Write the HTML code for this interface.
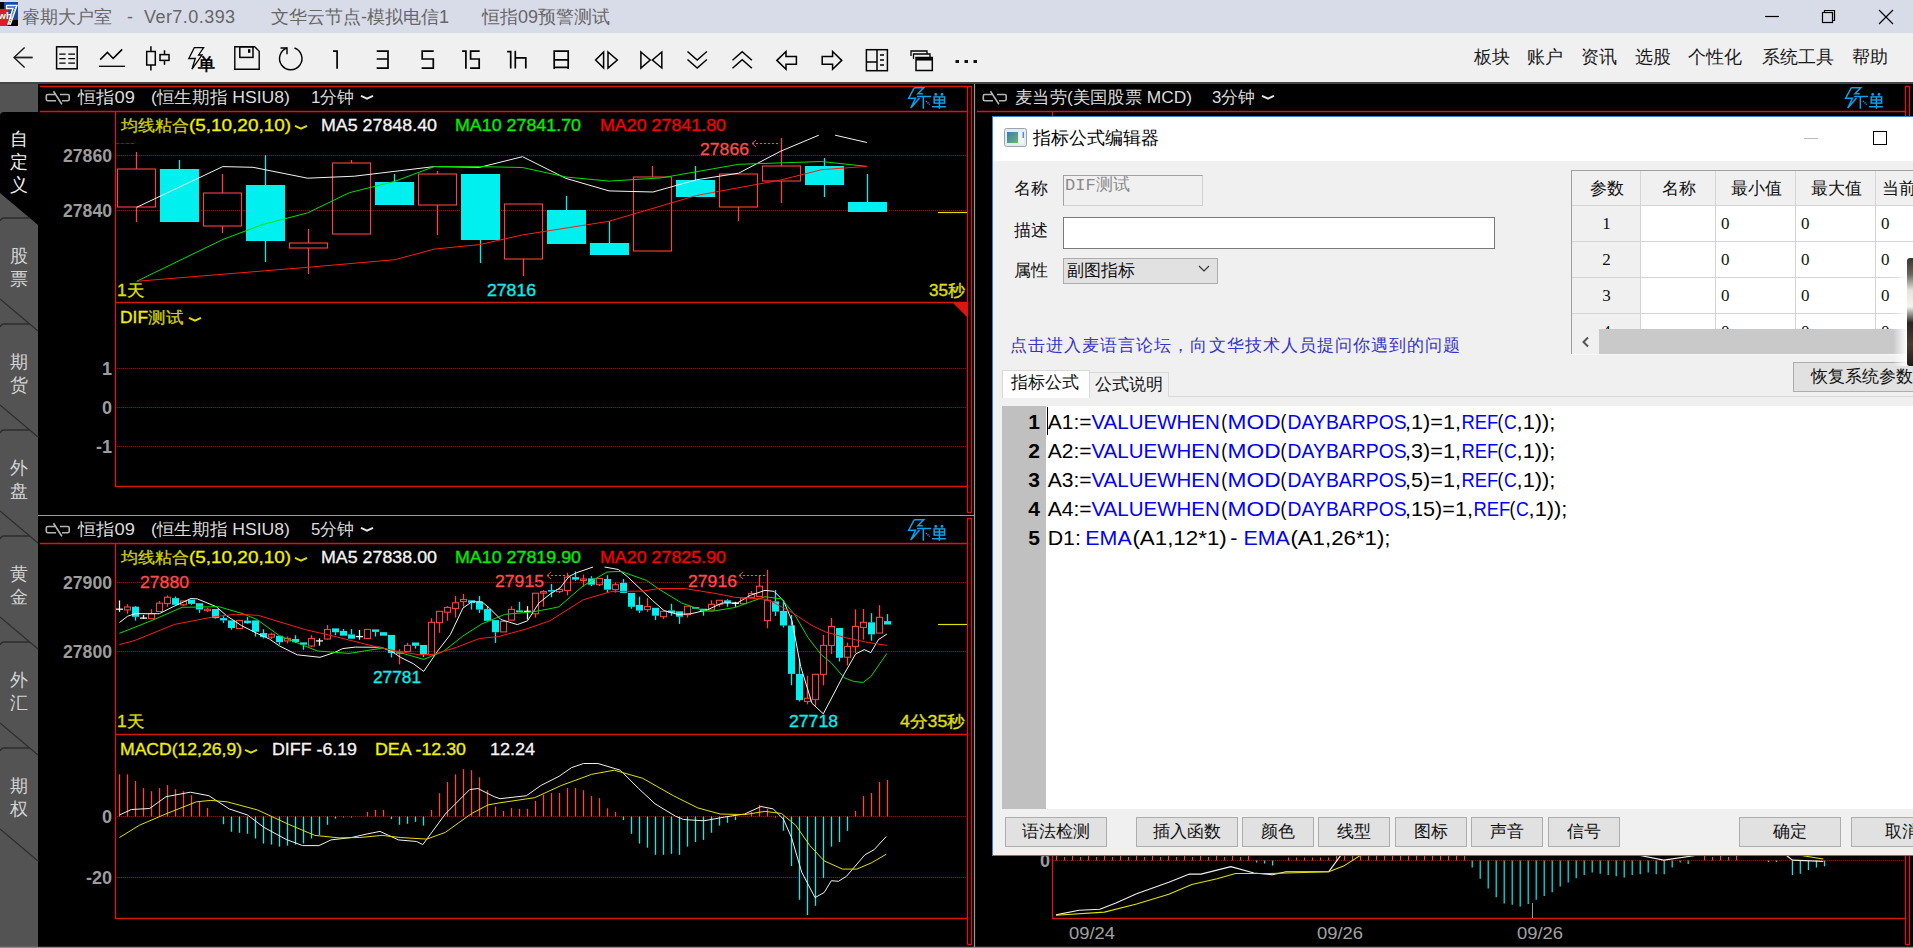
<!DOCTYPE html><html><head><meta charset="utf-8"><style>
*{margin:0;padding:0;box-sizing:border-box}
html,body{width:1913px;height:948px;overflow:hidden;background:#000;font-family:"Liberation Sans",sans-serif}
.a{position:absolute;white-space:nowrap}
#title{left:0;top:0;width:1913px;height:33px;background:#d8dbe8}
#tool{left:0;top:33px;width:1913px;height:49px;background:#f0f0f0}
#sep{left:0;top:82px;width:1913px;height:2px;background:#454545}
.tt{font-size:18px;color:#666;top:6px;line-height:22px}
.mn{font-size:18px;color:#1a1a1a;top:46px;line-height:22px}
.dlg{left:992px;top:116px;width:930px;height:740px;background:#f0f0f0;border:1px solid #3c7fd0;border-right:none}
.btn{background:#e1e1e1;border:1px solid #adadad;font-size:17px;color:#111;text-align:center;line-height:28px;height:30px;top:817px}
.lbl{font-size:17px;color:#111;line-height:20px}
.code{font-size:20px;line-height:29px;color:#000}
.code b{font-weight:normal;color:#0000ff}
.ln{font-size:21px;font-weight:bold;color:#000;line-height:29px;text-align:right;width:40px}
</style></head><body>
<div class="a" id="title"></div>
<svg class="a" style="left:0;top:2px" width="19" height="25" viewBox="0 0 19 25">
<rect x="0" y="0" width="18" height="24" fill="#1848a8"/><rect x="0" y="0" width="4" height="7" fill="#000"/>
<rect x="0" y="7" width="8" height="17" fill="#d82020"/><rect x="8" y="18" width="10" height="6" fill="#000"/>
<path d="M6.5 3.5 H17 L10.5 22 H8 L13 6.5 H6.5 Z" fill="#2a5ab8" stroke="#fff" stroke-width="1.3"/>
<path d="M15.5 5 L9.5 21" stroke="#fff" stroke-width="1" stroke-dasharray="1 1"/>
<text x="-1.5" y="17" font-size="9.5" font-weight="bold" fill="#fff" font-family="Liberation Sans">wh</text></svg>
<div class="a tt" style="left:22px">睿期大户室</div><div class="a tt" style="left:127px">-</div><div class="a tt" style="left:144px;letter-spacing:0.45px">Ver7.0.393</div>
<div class="a tt" style="left:271px">文华云节点-模拟电信1</div>
<div class="a tt" style="left:482px">恒指09预警测试</div>
<svg class="a" style="left:1760px;top:6px" width="140" height="22">
<line x1="5" y1="10.5" x2="19" y2="10.5" stroke="#000" stroke-width="1.2"/>
<rect x="62.5" y="6.5" width="10" height="10" fill="none" stroke="#000" stroke-width="1.2"/>
<path d="M64.5 6.5 V4.5 H74.5 V14.5 H72.5" fill="none" stroke="#000" stroke-width="1.2"/>
<path d="M119 4 L133 18 M133 4 L119 18" stroke="#000" stroke-width="1.2"/></svg>
<div class="a" id="tool"></div>
<div class="a" id="sep"></div>
<div class="a mn" style="left:1474px">板块</div>
<div class="a mn" style="left:1527px">账户</div>
<div class="a mn" style="left:1581px">资讯</div>
<div class="a mn" style="left:1635px">选股</div>
<div class="a mn" style="left:1688px">个性化</div>
<div class="a mn" style="left:1762px">系统工具</div>
<div class="a mn" style="left:1852px">帮助</div>
<svg class="a" style="left:0;top:0" width="1000" height="81" viewBox="0 0 1000 81">
<path d="M24.6 47.6 L14 57.5 L24.6 67.4" fill="none" stroke="#111" stroke-width="1.3"/><path d="M14 57.5 H32.7" stroke="#222" stroke-width="1.8"/>
<rect x="56.6" y="46.8" width="20.6" height="22" fill="none" stroke="#000" stroke-width="1.5"/>
<path d="M59.3 54.2 H65.6 M68.3 54.2 H75" stroke="#000" stroke-width="1.3"/>
<path d="M59.3 58.7 H65.6 M68.3 58.7 H75" stroke="#000" stroke-width="1.3"/>
<path d="M59.3 63.2 H65.6 M68.3 63.2 H75" stroke="#000" stroke-width="1.3"/>
<path d="M100.2 59.6 L107.4 52.4 L113.2 58.4 L122.2 49.4" fill="none" stroke="#000" stroke-width="1.5"/><path d="M99 66.3 H125" stroke="#000" stroke-width="1.3"/>
<rect x="146.7" y="51.5" width="8.6" height="13.5" fill="none" stroke="#000" stroke-width="1.5"/><path d="M150.9 46.3 V51.5 M150.9 65 V70.6" fill="none" stroke="#000" stroke-width="1.5"/>
<rect x="160" y="54.6" width="9" height="5.8" fill="none" stroke="#000" stroke-width="1.5"/><path d="M164.5 50.3 V54.6 M164.5 60.4 V64.7" fill="none" stroke="#000" stroke-width="1.5"/>
<path d="M194.3 47.6 H203.6 L198.6 55 H202 L192 69.2 L195.3 58.5 H188.8 Z" fill="none" stroke="#000" stroke-width="1.3" stroke-linejoin="miter"/>
<text x="198" y="70" font-size="17" font-weight="bold" fill="#000" font-family="Liberation Sans">单</text>
<path d="M234.8 46.8 H254.7 L259.2 51.3 V69.2 H234.8 Z" fill="none" stroke="#000" stroke-width="1.4"/>
<rect x="239.8" y="46.8" width="13.2" height="10.6" fill="none" stroke="#000" stroke-width="1.5"/><rect x="248" y="49.2" width="2.4" height="3.6" fill="#000"/>
<path d="M287 48 A11.2 11.2 0 1 0 294.5 48" fill="none" stroke="#000" stroke-width="1.4"/><path d="M280.5 48 H287 V54.3" fill="none" stroke="#000" stroke-width="1.4"/>
<path d="M333 51.1 H337.1 V68.7" fill="none" stroke="#000" stroke-width="1.7" stroke-linecap="butt"/>
<path d="M376.7 51.1 H388 V68.2 H376.7 M376.7 59 H388" fill="none" stroke="#000" stroke-width="1.7" stroke-linecap="butt"/>
<path d="M433.7 51.1 H422.2 V59 H433.3 V68.2 H421.6" fill="none" stroke="#000" stroke-width="1.7" stroke-linecap="butt"/>
<path d="M462.1 51.1 H465.9 V68.7" fill="none" stroke="#000" stroke-width="1.7" stroke-linecap="butt"/><path d="M479.7 51.1 H470.6 V59 H479.2 V68.2 H470" fill="none" stroke="#000" stroke-width="1.7" stroke-linecap="butt"/>
<path d="M507.1 51.6 H510.7 V68.4 M515.3 50.7 V68.4 M515.3 57.8 H525.8 V68.4" fill="none" stroke="#000" stroke-width="1.7" stroke-linecap="butt"/>
<path d="M554.2 68.9 V51.1 H568.2 V68.9 M554.2 59.8 H568.2 M554.2 67.4 H568.2" fill="none" stroke="#000" stroke-width="1.7" stroke-linecap="butt"/>
<path d="M603.6 52 L595.6 60 L603.6 68 Z M608 52 L617.3 60 L608 68 Z" fill="none" stroke="#000" stroke-width="1.5"/>
<path d="M640.9 52 L650.2 60 L640.9 68 Z M661.8 52 L652.4 60 L661.8 68 Z" fill="none" stroke="#000" stroke-width="1.5"/>
<path d="M687.5 51.5 L697.2 60 L706.9 51.5 M687.5 59.5 L697.2 68 L706.9 59.5" fill="none" stroke="#000" stroke-width="1.5"/>
<path d="M732.5 60.3 L742.2 51.8 L751.9 60.3 M732.5 68.3 L742.2 59.8 L751.9 68.3" fill="none" stroke="#000" stroke-width="1.5"/>
<path d="M776.9 60.4 L786 51.5 V56.6 H796.4 V64.2 H786 V69.3 Z" fill="none" stroke="#000" stroke-width="1.5" stroke-linejoin="miter"/>
<path d="M841.7 60.4 L832.6 51.5 V56.6 H822.2 V64.2 H832.6 V69.3 Z" fill="none" stroke="#000" stroke-width="1.5" stroke-linejoin="miter"/>
<rect x="866.4" y="49.7" width="21" height="21" fill="none" stroke="#000" stroke-width="1.5"/><path d="M877 49.7 V70.7 M866.4 62 H877" fill="none" stroke="#000" stroke-width="1.5"/><path d="M880 55 H884 M880 60 H884 M880 65 H884" stroke="#000" stroke-width="1.5"/>
<path d="M911 56 V51 H927 V54.5 M913.5 59 V54 H930 V57" fill="none" stroke="#000" stroke-width="1.3"/><rect x="916" y="57.5" width="16.3" height="13" fill="none" stroke="#000" stroke-width="1.5"/><path d="M916 59.3 H932.3" stroke="#000" stroke-width="2.5"/>
<rect x="955.5" y="60" width="3.5" height="3" fill="#111"/><rect x="964.5" y="60" width="3.5" height="3" fill="#111"/><rect x="973.5" y="60" width="3.5" height="3" fill="#111"/>
</svg>
<!--SIDEBAR-->
<svg class="a" style="left:0;top:0" width="1913" height="948" font-family="Liberation Sans">
<rect x="0" y="84" width="38" height="864" fill="#535353"/>
<path d="M0 116 Q0 112 4 112 H38 V225 L0 193 Z" fill="#000"/>
<text x="10" y="145" font-size="18" fill="#f0f0f0" stroke="#f0f0f0" stroke-width="0" >自</text>
<text x="10" y="168" font-size="18" fill="#f0f0f0" stroke="#f0f0f0" stroke-width="0" >定</text>
<text x="10" y="191" font-size="18" fill="#f0f0f0" stroke="#f0f0f0" stroke-width="0" >义</text>
<path d="M0 221 Q1 218 4 218 H29.7" fill="none" stroke="#2e2e2e" stroke-width="1.3"/>
<line x1="0" y1="299" x2="38" y2="331" stroke="#2e2e2e" stroke-width="1.3"/>
<text x="10" y="262" font-size="18" fill="#d4d4d4" stroke="#d4d4d4" stroke-width="0" >股</text>
<text x="10" y="285" font-size="18" fill="#d4d4d4" stroke="#d4d4d4" stroke-width="0" >票</text>
<path d="M0 327 Q1 324 4 324 H29.7" fill="none" stroke="#2e2e2e" stroke-width="1.3"/>
<line x1="0" y1="405" x2="38" y2="437" stroke="#2e2e2e" stroke-width="1.3"/>
<text x="10" y="368" font-size="18" fill="#d4d4d4" stroke="#d4d4d4" stroke-width="0" >期</text>
<text x="10" y="391" font-size="18" fill="#d4d4d4" stroke="#d4d4d4" stroke-width="0" >货</text>
<path d="M0 433 Q1 430 4 430 H29.7" fill="none" stroke="#2e2e2e" stroke-width="1.3"/>
<line x1="0" y1="511" x2="38" y2="543" stroke="#2e2e2e" stroke-width="1.3"/>
<text x="10" y="474" font-size="18" fill="#d4d4d4" stroke="#d4d4d4" stroke-width="0" >外</text>
<text x="10" y="497" font-size="18" fill="#d4d4d4" stroke="#d4d4d4" stroke-width="0" >盘</text>
<path d="M0 539 Q1 536 4 536 H29.7" fill="none" stroke="#2e2e2e" stroke-width="1.3"/>
<line x1="0" y1="617" x2="38" y2="649" stroke="#2e2e2e" stroke-width="1.3"/>
<text x="10" y="580" font-size="18" fill="#d4d4d4" stroke="#d4d4d4" stroke-width="0" >黄</text>
<text x="10" y="603" font-size="18" fill="#d4d4d4" stroke="#d4d4d4" stroke-width="0" >金</text>
<path d="M0 645 Q1 642 4 642 H29.7" fill="none" stroke="#2e2e2e" stroke-width="1.3"/>
<line x1="0" y1="723" x2="38" y2="755" stroke="#2e2e2e" stroke-width="1.3"/>
<text x="10" y="686" font-size="18" fill="#d4d4d4" stroke="#d4d4d4" stroke-width="0" >外</text>
<text x="10" y="709" font-size="18" fill="#d4d4d4" stroke="#d4d4d4" stroke-width="0" >汇</text>
<path d="M0 751 Q1 748 4 748 H29.7" fill="none" stroke="#2e2e2e" stroke-width="1.3"/>
<line x1="0" y1="829" x2="38" y2="861" stroke="#2e2e2e" stroke-width="1.3"/>
<text x="10" y="792" font-size="18" fill="#d4d4d4" stroke="#d4d4d4" stroke-width="0" >期</text>
<text x="10" y="815" font-size="18" fill="#d4d4d4" stroke="#d4d4d4" stroke-width="0" >权</text>

<line x1="38" y1="515.5" x2="974" y2="515.5" stroke="#9a9a9a" stroke-width="1.2"/>
<line x1="974.5" y1="84" x2="974.5" y2="948" stroke="#9a9a9a" stroke-width="1.2"/>
<line x1="0" y1="947.5" x2="1913" y2="947.5" stroke="#8a8a8a" stroke-width="1.5"/>
<line x1="40" y1="86.5" x2="967" y2="86.5" stroke="#d81810" stroke-width="1.3"/>
<line x1="40" y1="111.5" x2="967" y2="111.5" stroke="#d81810" stroke-width="1.3"/>
<line x1="115" y1="302.5" x2="967" y2="302.5" stroke="#d81810" stroke-width="1.3"/>
<line x1="115" y1="486.5" x2="967" y2="486.5" stroke="#d81810" stroke-width="1.3"/>
<line x1="115.5" y1="111" x2="115.5" y2="487" stroke="#d81810" stroke-width="1.3"/>
<rect x="967.5" y="86.5" width="4" height="426" rx="0.5" fill="none" stroke="#d81810" stroke-width="1.3"/>
<line x1="40" y1="543.5" x2="967" y2="543.5" stroke="#d81810" stroke-width="1.3"/>
<line x1="115" y1="734.5" x2="967" y2="734.5" stroke="#d81810" stroke-width="1.3"/>
<line x1="115" y1="918.5" x2="967" y2="918.5" stroke="#d81810" stroke-width="1.3"/>
<line x1="115.5" y1="543" x2="115.5" y2="919" stroke="#d81810" stroke-width="1.3"/>
<rect x="967.5" y="518.5" width="4" height="426" rx="0.5" fill="none" stroke="#d81810" stroke-width="1.3"/>
<g transform="translate(46,91)"><path d="M9.7 3.5 H1.8 Q0.3 3.5 0.3 5 V8.2 Q0.3 9.7 1.8 9.7 H10 M7.5 0.3 L15.9 13.2 M14 3.5 H21.7 Q23.2 3.5 23.2 5 V8.2 Q23.2 9.7 21.7 9.7 H16" fill="none" stroke="#b4b4b4" stroke-width="1.6"/></g>
<text x="78" y="103" font-size="17" fill="#dcdcdc" stroke="#dcdcdc" stroke-width="0" textLength="57" lengthAdjust="spacingAndGlyphs" >恒指09</text>
<text x="151" y="103" font-size="17" fill="#dcdcdc" stroke="#dcdcdc" stroke-width="0" textLength="139" lengthAdjust="spacingAndGlyphs" >(恒生期指 HSIU8)</text>
<text x="311" y="103" font-size="17" fill="#dcdcdc" stroke="#dcdcdc" stroke-width="0" textLength="43" lengthAdjust="spacingAndGlyphs" >1分钟</text>
<path d="M361 95.8 L367 98.6 L373 95.8" fill="none" stroke="#e6e6e6" stroke-width="2" stroke-linejoin="miter"/>
<g transform="translate(908,87)" fill="none" stroke="#0fa0ea" stroke-width="1.5"><path d="M6.2 0.8 H15.7 L10 6.8 H14.8 M6.2 0.8 L0.7 11.2 H7.5 L2.8 21 L11.5 11"/><path d="M9 9.5 H23 M15.3 9.5 V21.7"/><path d="M18 14 L21.7 17.6" stroke-dasharray="1.2 1"/><circle cx="27.7" cy="7.4" r="0.7" fill="#0fa0ea"/><circle cx="34" cy="7.4" r="0.7" fill="#0fa0ea"/><rect x="26.2" y="9.9" width="10.4" height="6.2"/><path d="M26.2 13 H36.6 M31.4 9.9 V21.7 M24 19.8 H37.9"/></g>
<g transform="translate(46,523)"><path d="M9.7 3.5 H1.8 Q0.3 3.5 0.3 5 V8.2 Q0.3 9.7 1.8 9.7 H10 M7.5 0.3 L15.9 13.2 M14 3.5 H21.7 Q23.2 3.5 23.2 5 V8.2 Q23.2 9.7 21.7 9.7 H16" fill="none" stroke="#b4b4b4" stroke-width="1.6"/></g>
<text x="78" y="535" font-size="17" fill="#dcdcdc" stroke="#dcdcdc" stroke-width="0" textLength="57" lengthAdjust="spacingAndGlyphs" >恒指09</text>
<text x="151" y="535" font-size="17" fill="#dcdcdc" stroke="#dcdcdc" stroke-width="0" textLength="139" lengthAdjust="spacingAndGlyphs" >(恒生期指 HSIU8)</text>
<text x="311" y="535" font-size="17" fill="#dcdcdc" stroke="#dcdcdc" stroke-width="0" textLength="43" lengthAdjust="spacingAndGlyphs" >5分钟</text>
<path d="M361 527.8 L367 530.6 L373 527.8" fill="none" stroke="#e6e6e6" stroke-width="2" stroke-linejoin="miter"/>
<g transform="translate(908,519)" fill="none" stroke="#0fa0ea" stroke-width="1.5"><path d="M6.2 0.8 H15.7 L10 6.8 H14.8 M6.2 0.8 L0.7 11.2 H7.5 L2.8 21 L11.5 11"/><path d="M9 9.5 H23 M15.3 9.5 V21.7"/><path d="M18 14 L21.7 17.6" stroke-dasharray="1.2 1"/><circle cx="27.7" cy="7.4" r="0.7" fill="#0fa0ea"/><circle cx="34" cy="7.4" r="0.7" fill="#0fa0ea"/><rect x="26.2" y="9.9" width="10.4" height="6.2"/><path d="M26.2 13 H36.6 M31.4 9.9 V21.7 M24 19.8 H37.9"/></g>
<line x1="117" y1="155.5" x2="966" y2="155.5" stroke="#a80404" stroke-width="1" stroke-dasharray="1 1"/>
<line x1="117" y1="210.5" x2="966" y2="210.5" stroke="#a80404" stroke-width="1" stroke-dasharray="1 1"/>
<line x1="116" y1="143.5" x2="135" y2="143.5" stroke="#a80404" stroke-width="1" stroke-dasharray="3 2"/>
<text x="112" y="162" font-size="18" fill="#9c9c9c" stroke="#9c9c9c" stroke-width="0" textLength="49" lengthAdjust="spacingAndGlyphs" text-anchor="end" font-weight="bold" >27860</text>
<text x="112" y="217" font-size="18" fill="#9c9c9c" stroke="#9c9c9c" stroke-width="0" textLength="49" lengthAdjust="spacingAndGlyphs" text-anchor="end" font-weight="bold" >27840</text>
<text x="121" y="131" font-size="16" fill="#d0d000" stroke="#d0d000" stroke-width="0.3" textLength="68" lengthAdjust="spacingAndGlyphs" >均线粘合</text>
<text x="189" y="131" font-size="16" fill="#f0f000" stroke="#f0f000" stroke-width="0.3" textLength="102" lengthAdjust="spacingAndGlyphs" >(5,10,20,10)</text>
<path d="M295 125.8 L301 128.6 L307 125.8" fill="none" stroke="#e0e000" stroke-width="2" stroke-linejoin="miter"/>
<text x="321" y="131" font-size="16" fill="#f4f4f4" stroke="#f4f4f4" stroke-width="0.3" textLength="116" lengthAdjust="spacingAndGlyphs" >MA5 27848.40</text>
<text x="455" y="131" font-size="16" fill="#00f000" stroke="#00f000" stroke-width="0.3" textLength="126" lengthAdjust="spacingAndGlyphs" >MA10 27841.70</text>
<text x="600" y="131" font-size="16" fill="#f80000" stroke="#f80000" stroke-width="0.3" textLength="126" lengthAdjust="spacingAndGlyphs" >MA20 27841.80</text>
<line x1="136.5" y1="152" x2="136.5" y2="169" stroke="#ff4040" stroke-width="1.3"/><line x1="136.5" y1="207" x2="136.5" y2="222" stroke="#ff4040" stroke-width="1.3"/><rect x="117.5" y="169" width="38" height="38.0" fill="none" stroke="#ff4040" stroke-width="1.1"/>
<line x1="179.5" y1="160" x2="179.5" y2="169" stroke="#00f0f0" stroke-width="1.3"/><rect x="160.0" y="169" width="39" height="53.0" fill="#00f0f0"/>
<line x1="222.5" y1="174" x2="222.5" y2="193" stroke="#ff4040" stroke-width="1.3"/><line x1="222.5" y1="226" x2="222.5" y2="233" stroke="#ff4040" stroke-width="1.3"/><rect x="203.5" y="193" width="38" height="33.0" fill="none" stroke="#ff4040" stroke-width="1.1"/>
<line x1="265.5" y1="155" x2="265.5" y2="185" stroke="#00f0f0" stroke-width="1.3"/><line x1="265.5" y1="241" x2="265.5" y2="262" stroke="#00f0f0" stroke-width="1.3"/><rect x="246.0" y="185" width="39" height="56.0" fill="#00f0f0"/>
<line x1="308.5" y1="229" x2="308.5" y2="243" stroke="#ff4040" stroke-width="1.3"/><line x1="308.5" y1="248" x2="308.5" y2="274" stroke="#ff4040" stroke-width="1.3"/><rect x="289.5" y="243" width="38" height="5.0" fill="none" stroke="#ff4040" stroke-width="1.1"/>
<line x1="351.5" y1="160" x2="351.5" y2="163" stroke="#ff4040" stroke-width="1.3"/><rect x="332.5" y="163" width="38" height="71.0" fill="none" stroke="#ff4040" stroke-width="1.1"/>
<line x1="394.5" y1="174" x2="394.5" y2="182" stroke="#00f0f0" stroke-width="1.3"/><rect x="375.0" y="182" width="39" height="23.0" fill="#00f0f0"/>
<line x1="437.5" y1="171" x2="437.5" y2="174" stroke="#ff4040" stroke-width="1.3"/><line x1="437.5" y1="205" x2="437.5" y2="235" stroke="#ff4040" stroke-width="1.3"/><rect x="418.5" y="174" width="38" height="31.0" fill="none" stroke="#ff4040" stroke-width="1.1"/>
<line x1="480.5" y1="240" x2="480.5" y2="263" stroke="#00f0f0" stroke-width="1.3"/><rect x="461.0" y="174" width="39" height="66.0" fill="#00f0f0"/>
<line x1="523.5" y1="259" x2="523.5" y2="276" stroke="#ff4040" stroke-width="1.3"/><rect x="504.5" y="204" width="38" height="55.0" fill="none" stroke="#ff4040" stroke-width="1.1"/>
<line x1="566.5" y1="196" x2="566.5" y2="210" stroke="#00f0f0" stroke-width="1.3"/><rect x="547.0" y="210" width="39" height="34.0" fill="#00f0f0"/>
<line x1="609.5" y1="221" x2="609.5" y2="243" stroke="#00f0f0" stroke-width="1.3"/><rect x="590.0" y="243" width="39" height="12.0" fill="#00f0f0"/>
<line x1="652.5" y1="166" x2="652.5" y2="177" stroke="#ff4040" stroke-width="1.3"/><rect x="633.5" y="177" width="38" height="74.0" fill="none" stroke="#ff4040" stroke-width="1.1"/>
<line x1="695.5" y1="166" x2="695.5" y2="180" stroke="#00f0f0" stroke-width="1.3"/><rect x="676.0" y="180" width="39" height="17.0" fill="#00f0f0"/>
<line x1="738.5" y1="207" x2="738.5" y2="221" stroke="#ff4040" stroke-width="1.3"/><rect x="719.5" y="174" width="38" height="33.0" fill="none" stroke="#ff4040" stroke-width="1.1"/>
<line x1="781.5" y1="138" x2="781.5" y2="166" stroke="#ff4040" stroke-width="1.3"/><line x1="781.5" y1="181" x2="781.5" y2="203" stroke="#ff4040" stroke-width="1.3"/><rect x="762.5" y="166" width="38" height="15.0" fill="none" stroke="#ff4040" stroke-width="1.1"/>
<line x1="824.5" y1="158" x2="824.5" y2="166" stroke="#00f0f0" stroke-width="1.3"/><line x1="824.5" y1="185" x2="824.5" y2="197" stroke="#00f0f0" stroke-width="1.3"/><rect x="805.0" y="166" width="39" height="19.0" fill="#00f0f0"/>
<line x1="867.5" y1="174" x2="867.5" y2="202" stroke="#00f0f0" stroke-width="1.3"/><rect x="848.0" y="202" width="39" height="10.0" fill="#00f0f0"/>
<polyline points="136.7,207.3 222.8,166.6 253.0,167.3 307.6,178.2 354.4,176.2 434.2,166.6 479.7,167.3 522.5,156.7 566.0,178.4 609.0,190.9 653.0,192.0 696.5,179.8 738.6,173.2 780.7,151.2 818.8,135.2" fill="none" stroke="#f4f4f4" stroke-width="1.0" stroke-linejoin="round" />
<polyline points="835.1,135.2 866.9,142.5" fill="none" stroke="#f4f4f4" stroke-width="1.0" stroke-linejoin="round" />
<polyline points="136.7,281.3 222.8,239.5 263.3,224.3 307.6,212.9 349.4,192.7 394.9,181.3 434.2,166.6 479.7,166.6 522.5,167.5 566.0,177.0 609.0,181.1 661.1,177.9 738.6,164.3 821.5,161.5 866.9,166.4" fill="none" stroke="#00e000" stroke-width="1.0" stroke-linejoin="round" />
<polyline points="136.7,281.3 307.6,267.3 394.9,259.7 434.2,249.1 479.7,244.6 522.5,234.9 609.0,221.3 696.5,195.5 780.7,180.0 821.5,169.7 866.9,166.4" fill="none" stroke="#ff1a1a" stroke-width="1.0" stroke-linejoin="round" />
<text x="700" y="155" font-size="16" fill="#ff4a4a" stroke="#ff4a4a" stroke-width="0.3" textLength="49" lengthAdjust="spacingAndGlyphs" >27866</text>
<path d="M752 143.5 H780" stroke="#ff4a4a" stroke-width="1" stroke-dasharray="2 2"/><path d="M756 140 L752 143.5 L756 147" fill="none" stroke="#ff4a4a" stroke-width="1"/>
<text x="487" y="296" font-size="16" fill="#00f0f0" stroke="#00f0f0" stroke-width="0.3" textLength="49" lengthAdjust="spacingAndGlyphs" >27816</text>
<text x="117" y="296" font-size="16" fill="#e0e000" stroke="#e0e000" stroke-width="0.3" textLength="27" lengthAdjust="spacingAndGlyphs" >1天</text>
<text x="929" y="296" font-size="16" fill="#e0e000" stroke="#e0e000" stroke-width="0.3" textLength="36" lengthAdjust="spacingAndGlyphs" >35秒</text>
<line x1="938" y1="212.5" x2="967" y2="212.5" stroke="#e0e000" stroke-width="1.2"/>
<path d="M953 303 H967 V317 Z" fill="#d81810"/>
<text x="120" y="323" font-size="16" fill="#f0f000" stroke="#f0f000" stroke-width="0.3" textLength="28" lengthAdjust="spacingAndGlyphs" >DIF</text>
<text x="148" y="323" font-size="16" fill="#d0d000" stroke="#d0d000" stroke-width="0.3" textLength="35" lengthAdjust="spacingAndGlyphs" >测试</text>
<path d="M189 317.8 L195 320.6 L201 317.8" fill="none" stroke="#e0e000" stroke-width="2" stroke-linejoin="miter"/>
<line x1="117" y1="368.5" x2="966" y2="368.5" stroke="#a80404" stroke-width="1" stroke-dasharray="1 1"/>
<text x="112" y="375" font-size="18" fill="#9c9c9c" stroke="#9c9c9c" stroke-width="0" text-anchor="end" font-weight="bold" >1</text>
<line x1="117" y1="407.5" x2="966" y2="407.5" stroke="#a80404" stroke-width="1" stroke-dasharray="1 1"/>
<text x="112" y="414" font-size="18" fill="#9c9c9c" stroke="#9c9c9c" stroke-width="0" text-anchor="end" font-weight="bold" >0</text>
<line x1="117" y1="446.5" x2="966" y2="446.5" stroke="#a80404" stroke-width="1" stroke-dasharray="1 1"/>
<text x="112" y="453" font-size="18" fill="#9c9c9c" stroke="#9c9c9c" stroke-width="0" text-anchor="end" font-weight="bold" >-1</text>
<text x="121" y="563" font-size="16" fill="#d0d000" stroke="#d0d000" stroke-width="0.3" textLength="68" lengthAdjust="spacingAndGlyphs" >均线粘合</text>
<text x="189" y="563" font-size="16" fill="#f0f000" stroke="#f0f000" stroke-width="0.3" textLength="102" lengthAdjust="spacingAndGlyphs" >(5,10,20,10)</text>
<path d="M295 557.8 L301 560.6 L307 557.8" fill="none" stroke="#e0e000" stroke-width="2" stroke-linejoin="miter"/>
<text x="321" y="563" font-size="16" fill="#f4f4f4" stroke="#f4f4f4" stroke-width="0.3" textLength="116" lengthAdjust="spacingAndGlyphs" >MA5 27838.00</text>
<text x="455" y="563" font-size="16" fill="#00f000" stroke="#00f000" stroke-width="0.3" textLength="126" lengthAdjust="spacingAndGlyphs" >MA10 27819.90</text>
<text x="600" y="563" font-size="16" fill="#f80000" stroke="#f80000" stroke-width="0.3" textLength="126" lengthAdjust="spacingAndGlyphs" >MA20 27825.90</text>
<line x1="117" y1="582.5" x2="966" y2="582.5" stroke="#a80404" stroke-width="1" stroke-dasharray="1 1"/>
<text x="112" y="589" font-size="18" fill="#9c9c9c" stroke="#9c9c9c" stroke-width="0" textLength="49" lengthAdjust="spacingAndGlyphs" text-anchor="end" font-weight="bold" >27900</text>
<line x1="117" y1="651.5" x2="966" y2="651.5" stroke="#a80404" stroke-width="1" stroke-dasharray="1 1"/>
<text x="112" y="658" font-size="18" fill="#9c9c9c" stroke="#9c9c9c" stroke-width="0" textLength="49" lengthAdjust="spacingAndGlyphs" text-anchor="end" font-weight="bold" >27800</text>
<line x1="119.5" y1="600.4" x2="119.5" y2="611.8" stroke="#f0f0f0" stroke-width="1.3"/><line x1="116.0" y1="609.2" x2="123.0" y2="609.2" stroke="#f0f0f0" stroke-width="1.3"/>
<line x1="127.5" y1="604.2" x2="127.5" y2="607" stroke="#ff4040" stroke-width="1.3"/><line x1="127.5" y1="609.9" x2="127.5" y2="613.7" stroke="#ff4040" stroke-width="1.3"/><rect x="124.5" y="607" width="6" height="2.9" fill="none" stroke="#ff4040" stroke-width="1.1"/>
<line x1="135.5" y1="606" x2="135.5" y2="606.7" stroke="#00f0f0" stroke-width="1.3"/><line x1="135.5" y1="616.8" x2="135.5" y2="620.6" stroke="#00f0f0" stroke-width="1.3"/><rect x="132.0" y="606.7" width="7" height="10.1" fill="#00f0f0"/>
<line x1="143.5" y1="615" x2="143.5" y2="618.7" stroke="#f0f0f0" stroke-width="1.3"/><line x1="140.0" y1="618.1" x2="147.0" y2="618.1" stroke="#f0f0f0" stroke-width="1.3"/>
<line x1="151.5" y1="609.2" x2="151.5" y2="613.7" stroke="#ff4040" stroke-width="1.3"/><rect x="148.5" y="613.7" width="6" height="5.0" fill="none" stroke="#ff4040" stroke-width="1.1"/>
<line x1="159.5" y1="601" x2="159.5" y2="603.2" stroke="#ff4040" stroke-width="1.3"/><rect x="156.5" y="603.2" width="6" height="8.3" fill="none" stroke="#ff4040" stroke-width="1.1"/>
<line x1="167.5" y1="595.3" x2="167.5" y2="597.2" stroke="#ff4040" stroke-width="1.3"/><line x1="167.5" y1="603.5" x2="167.5" y2="606.7" stroke="#ff4040" stroke-width="1.3"/><rect x="164.5" y="597.2" width="6" height="6.3" fill="none" stroke="#ff4040" stroke-width="1.1"/>
<line x1="175.5" y1="596.5" x2="175.5" y2="598.1" stroke="#00f0f0" stroke-width="1.3"/><rect x="172.0" y="598.1" width="7" height="6.7" fill="#00f0f0"/>
<line x1="183.5" y1="604.8" x2="183.5" y2="606" stroke="#ff4040" stroke-width="1.3"/><rect x="180.5" y="601" width="6" height="3.8" fill="none" stroke="#ff4040" stroke-width="1.1"/>
<line x1="191.5" y1="603.9" x2="191.5" y2="604.8" stroke="#00f0f0" stroke-width="1.3"/><rect x="188.0" y="599.7" width="7" height="4.2" fill="#00f0f0"/>
<line x1="199.5" y1="609.5" x2="199.5" y2="612.8" stroke="#00f0f0" stroke-width="1.3"/><rect x="196.0" y="603.2" width="7" height="6.3" fill="#00f0f0"/>
<line x1="207.5" y1="607.7" x2="207.5" y2="609.2" stroke="#ff4040" stroke-width="1.3"/><line x1="207.5" y1="610.3" x2="207.5" y2="611.8" stroke="#ff4040" stroke-width="1.3"/><rect x="204.5" y="609.2" width="6" height="1.5" fill="none" stroke="#ff4040" stroke-width="1.1"/>
<line x1="215.5" y1="618.1" x2="215.5" y2="618.7" stroke="#00f0f0" stroke-width="1.3"/><rect x="212.0" y="609" width="7" height="9.1" fill="#00f0f0"/>
<line x1="223.5" y1="616.2" x2="223.5" y2="618.1" stroke="#00f0f0" stroke-width="1.3"/><line x1="223.5" y1="620.4" x2="223.5" y2="622.9" stroke="#00f0f0" stroke-width="1.3"/><rect x="220.0" y="618.1" width="7" height="2.3" fill="#00f0f0"/>
<line x1="231.5" y1="628" x2="231.5" y2="629.7" stroke="#00f0f0" stroke-width="1.3"/><rect x="228.0" y="620.4" width="7" height="7.6" fill="#00f0f0"/>
<rect x="236.5" y="620.4" width="6" height="8.1" fill="none" stroke="#ff4040" stroke-width="1.1"/>
<line x1="247.5" y1="617" x2="247.5" y2="620.6" stroke="#00f0f0" stroke-width="1.3"/><line x1="247.5" y1="623.2" x2="247.5" y2="623.8" stroke="#00f0f0" stroke-width="1.3"/><rect x="244.0" y="620.6" width="7" height="2.6" fill="#00f0f0"/>
<line x1="255.5" y1="631.8" x2="255.5" y2="636.5" stroke="#00f0f0" stroke-width="1.3"/><rect x="252.0" y="620.4" width="7" height="11.4" fill="#00f0f0"/>
<line x1="263.5" y1="629.2" x2="263.5" y2="633" stroke="#00f0f0" stroke-width="1.3"/><line x1="263.5" y1="637.1" x2="263.5" y2="638.4" stroke="#00f0f0" stroke-width="1.3"/><rect x="260.0" y="633" width="7" height="4.1" fill="#00f0f0"/>
<line x1="271.5" y1="632.7" x2="271.5" y2="634.3" stroke="#ff4040" stroke-width="1.3"/><line x1="271.5" y1="637.1" x2="271.5" y2="639" stroke="#ff4040" stroke-width="1.3"/><rect x="268.5" y="634.3" width="6" height="2.8" fill="none" stroke="#ff4040" stroke-width="1.1"/>
<line x1="279.5" y1="642.2" x2="279.5" y2="644.7" stroke="#00f0f0" stroke-width="1.3"/><rect x="276.0" y="635.8" width="7" height="6.4" fill="#00f0f0"/>
<line x1="287.5" y1="636.5" x2="287.5" y2="638.4" stroke="#ff4040" stroke-width="1.3"/><line x1="287.5" y1="640.9" x2="287.5" y2="643.4" stroke="#ff4040" stroke-width="1.3"/><rect x="284.5" y="638.4" width="6" height="2.5" fill="none" stroke="#ff4040" stroke-width="1.1"/>
<line x1="295.5" y1="635.2" x2="295.5" y2="639" stroke="#00f0f0" stroke-width="1.3"/><line x1="295.5" y1="642.2" x2="295.5" y2="643" stroke="#00f0f0" stroke-width="1.3"/><rect x="292.0" y="639" width="7" height="3.2" fill="#00f0f0"/>
<line x1="303.5" y1="644.7" x2="303.5" y2="649.7" stroke="#00f0f0" stroke-width="1.3"/><rect x="300.0" y="642.4" width="7" height="2.3" fill="#00f0f0"/>
<line x1="311.5" y1="635.2" x2="311.5" y2="638.4" stroke="#ff4040" stroke-width="1.3"/><line x1="311.5" y1="646" x2="311.5" y2="647.2" stroke="#ff4040" stroke-width="1.3"/><rect x="308.5" y="638.4" width="6" height="7.6" fill="none" stroke="#ff4040" stroke-width="1.1"/>
<line x1="319.5" y1="638.4" x2="319.5" y2="645.7" stroke="#f0f0f0" stroke-width="1.3"/><line x1="316.0" y1="640.9" x2="323.0" y2="640.9" stroke="#f0f0f0" stroke-width="1.3"/>
<line x1="327.5" y1="625" x2="327.5" y2="629.5" stroke="#ff4040" stroke-width="1.3"/><line x1="327.5" y1="639" x2="327.5" y2="639.6" stroke="#ff4040" stroke-width="1.3"/><rect x="324.5" y="629.5" width="6" height="9.5" fill="none" stroke="#ff4040" stroke-width="1.1"/>
<line x1="335.5" y1="632.2" x2="335.5" y2="635.3" stroke="#00f0f0" stroke-width="1.3"/><rect x="332.0" y="628.4" width="7" height="3.8" fill="#00f0f0"/>
<line x1="343.5" y1="629" x2="343.5" y2="630.9" stroke="#00f0f0" stroke-width="1.3"/><rect x="340.0" y="630.9" width="7" height="4.8" fill="#00f0f0"/>
<line x1="351.5" y1="629" x2="351.5" y2="634.4" stroke="#00f0f0" stroke-width="1.3"/><rect x="348.0" y="634.4" width="7" height="4.3" fill="#00f0f0"/>
<line x1="359.5" y1="629.9" x2="359.5" y2="639.7" stroke="#f0f0f0" stroke-width="1.3"/><line x1="356.0" y1="636.6" x2="363.0" y2="636.6" stroke="#f0f0f0" stroke-width="1.3"/>
<rect x="364.5" y="629.4" width="6" height="9.1" fill="none" stroke="#ff4040" stroke-width="1.1"/>
<line x1="375.5" y1="631.9" x2="375.5" y2="636.6" stroke="#00f0f0" stroke-width="1.3"/><rect x="372.0" y="629.4" width="7" height="2.5" fill="#00f0f0"/>
<rect x="380.0" y="632.2" width="7" height="3.5" fill="#00f0f0"/>
<line x1="391.5" y1="653" x2="391.5" y2="657.5" stroke="#00f0f0" stroke-width="1.3"/><rect x="388.0" y="634.9" width="7" height="18.1" fill="#00f0f0"/>
<line x1="399.5" y1="649.2" x2="399.5" y2="652" stroke="#ff4040" stroke-width="1.3"/><line x1="399.5" y1="653.5" x2="399.5" y2="664.4" stroke="#ff4040" stroke-width="1.3"/><rect x="396.5" y="652" width="6" height="1.5" fill="none" stroke="#ff4040" stroke-width="1.1"/>
<line x1="407.5" y1="642.9" x2="407.5" y2="645.4" stroke="#ff4040" stroke-width="1.3"/><rect x="404.5" y="645.4" width="6" height="6.0" fill="none" stroke="#ff4040" stroke-width="1.1"/>
<line x1="415.5" y1="645.8" x2="415.5" y2="648.6" stroke="#00f0f0" stroke-width="1.3"/><rect x="412.0" y="642.5" width="7" height="3.3" fill="#00f0f0"/>
<line x1="423.5" y1="654.9" x2="423.5" y2="657" stroke="#00f0f0" stroke-width="1.3"/><rect x="420.0" y="645" width="7" height="9.9" fill="#00f0f0"/>
<line x1="431.5" y1="618.2" x2="431.5" y2="622.3" stroke="#ff4040" stroke-width="1.3"/><rect x="428.5" y="622.3" width="6" height="32.6" fill="none" stroke="#ff4040" stroke-width="1.1"/>
<line x1="439.5" y1="622.7" x2="439.5" y2="632.8" stroke="#ff4040" stroke-width="1.3"/><rect x="436.5" y="611.3" width="6" height="11.4" fill="none" stroke="#ff4040" stroke-width="1.1"/>
<line x1="447.5" y1="606.2" x2="447.5" y2="607.5" stroke="#ff4040" stroke-width="1.3"/><line x1="447.5" y1="612.2" x2="447.5" y2="620.8" stroke="#ff4040" stroke-width="1.3"/><rect x="444.5" y="607.5" width="6" height="4.7" fill="none" stroke="#ff4040" stroke-width="1.1"/>
<line x1="455.5" y1="596.1" x2="455.5" y2="602.8" stroke="#ff4040" stroke-width="1.3"/><line x1="455.5" y1="608.4" x2="455.5" y2="617.6" stroke="#ff4040" stroke-width="1.3"/><rect x="452.5" y="602.8" width="6" height="5.6" fill="none" stroke="#ff4040" stroke-width="1.1"/>
<line x1="463.5" y1="593.9" x2="463.5" y2="599.5" stroke="#ff4040" stroke-width="1.3"/><line x1="463.5" y1="601.5" x2="463.5" y2="606.8" stroke="#ff4040" stroke-width="1.3"/><rect x="460.5" y="599.5" width="6" height="2.0" fill="none" stroke="#ff4040" stroke-width="1.1"/>
<line x1="471.5" y1="602.8" x2="471.5" y2="609.6" stroke="#00f0f0" stroke-width="1.3"/><rect x="468.0" y="600.3" width="7" height="2.5" fill="#00f0f0"/>
<line x1="479.5" y1="596.1" x2="479.5" y2="601.8" stroke="#00f0f0" stroke-width="1.3"/><line x1="479.5" y1="609.6" x2="479.5" y2="612.9" stroke="#00f0f0" stroke-width="1.3"/><rect x="476.0" y="601.8" width="7" height="7.8" fill="#00f0f0"/>
<line x1="487.5" y1="606.2" x2="487.5" y2="609.1" stroke="#00f0f0" stroke-width="1.3"/><rect x="484.0" y="609.1" width="7" height="11.7" fill="#00f0f0"/>
<line x1="495.5" y1="632.2" x2="495.5" y2="642.9" stroke="#00f0f0" stroke-width="1.3"/><rect x="492.0" y="620.1" width="7" height="12.1" fill="#00f0f0"/>
<rect x="500.5" y="621.4" width="6" height="10.5" fill="none" stroke="#ff4040" stroke-width="1.1"/>
<line x1="511.5" y1="606.2" x2="511.5" y2="609.4" stroke="#ff4040" stroke-width="1.3"/><rect x="508.5" y="609.4" width="6" height="10.7" fill="none" stroke="#ff4040" stroke-width="1.1"/>
<line x1="519.5" y1="601.8" x2="519.5" y2="610.4" stroke="#00f0f0" stroke-width="1.3"/><rect x="516.0" y="610.4" width="7" height="1.8" fill="#00f0f0"/>
<line x1="527.5" y1="606.2" x2="527.5" y2="619.5" stroke="#f0f0f0" stroke-width="1.3"/><line x1="524.0" y1="611.3" x2="531.0" y2="611.3" stroke="#f0f0f0" stroke-width="1.3"/>
<line x1="535.5" y1="613.8" x2="535.5" y2="617.6" stroke="#ff4040" stroke-width="1.3"/><rect x="532.5" y="593.2" width="6" height="20.6" fill="none" stroke="#ff4040" stroke-width="1.1"/>
<line x1="543.5" y1="590" x2="543.5" y2="591.6" stroke="#ff4040" stroke-width="1.3"/><line x1="543.5" y1="592.9" x2="543.5" y2="606.8" stroke="#ff4040" stroke-width="1.3"/><rect x="540.5" y="591.6" width="6" height="1.5" fill="none" stroke="#ff4040" stroke-width="1.1"/>
<line x1="551.5" y1="584" x2="551.5" y2="590.1" stroke="#00f0f0" stroke-width="1.3"/><line x1="551.5" y1="591.6" x2="551.5" y2="597.3" stroke="#00f0f0" stroke-width="1.3"/><rect x="548.0" y="590.1" width="7" height="1.5" fill="#00f0f0"/>
<line x1="559.5" y1="587.6" x2="559.5" y2="589.4" stroke="#ff4040" stroke-width="1.3"/><line x1="559.5" y1="591.6" x2="559.5" y2="593" stroke="#ff4040" stroke-width="1.3"/><rect x="556.5" y="589.4" width="6" height="2.2" fill="none" stroke="#ff4040" stroke-width="1.1"/>
<line x1="567.5" y1="572.7" x2="567.5" y2="577.1" stroke="#ff4040" stroke-width="1.3"/><line x1="567.5" y1="590.4" x2="567.5" y2="595.4" stroke="#ff4040" stroke-width="1.3"/><rect x="564.5" y="577.1" width="6" height="13.3" fill="none" stroke="#ff4040" stroke-width="1.1"/>
<line x1="575.5" y1="571.4" x2="575.5" y2="577.1" stroke="#00f0f0" stroke-width="1.3"/><line x1="575.5" y1="579.6" x2="575.5" y2="580.9" stroke="#00f0f0" stroke-width="1.3"/><rect x="572.0" y="577.1" width="7" height="2.5" fill="#00f0f0"/>
<line x1="583.5" y1="574.6" x2="583.5" y2="579" stroke="#ff4040" stroke-width="1.3"/><line x1="583.5" y1="579.6" x2="583.5" y2="586.6" stroke="#ff4040" stroke-width="1.3"/><rect x="580.5" y="579" width="6" height="1.5" fill="none" stroke="#ff4040" stroke-width="1.1"/>
<line x1="591.5" y1="576.2" x2="591.5" y2="578.4" stroke="#00f0f0" stroke-width="1.3"/><line x1="591.5" y1="584.7" x2="591.5" y2="586" stroke="#00f0f0" stroke-width="1.3"/><rect x="588.0" y="578.4" width="7" height="6.3" fill="#00f0f0"/>
<line x1="599.5" y1="584.7" x2="599.5" y2="586" stroke="#ff4040" stroke-width="1.3"/><rect x="596.5" y="578.4" width="6" height="6.3" fill="none" stroke="#ff4040" stroke-width="1.1"/>
<line x1="607.5" y1="575.2" x2="607.5" y2="579" stroke="#00f0f0" stroke-width="1.3"/><line x1="607.5" y1="589.7" x2="607.5" y2="592.9" stroke="#00f0f0" stroke-width="1.3"/><rect x="604.0" y="579" width="7" height="10.7" fill="#00f0f0"/>
<line x1="615.5" y1="582.5" x2="615.5" y2="584.7" stroke="#ff4040" stroke-width="1.3"/><line x1="615.5" y1="589.7" x2="615.5" y2="592.7" stroke="#ff4040" stroke-width="1.3"/><rect x="612.5" y="584.7" width="6" height="5.0" fill="none" stroke="#ff4040" stroke-width="1.1"/>
<line x1="623.5" y1="579" x2="623.5" y2="582.8" stroke="#00f0f0" stroke-width="1.3"/><rect x="620.0" y="582.8" width="7" height="10.1" fill="#00f0f0"/>
<line x1="631.5" y1="606.8" x2="631.5" y2="608.7" stroke="#00f0f0" stroke-width="1.3"/><rect x="628.0" y="592.9" width="7" height="13.9" fill="#00f0f0"/>
<line x1="639.5" y1="596.7" x2="639.5" y2="604.9" stroke="#00f0f0" stroke-width="1.3"/><line x1="639.5" y1="610.6" x2="639.5" y2="612.9" stroke="#00f0f0" stroke-width="1.3"/><rect x="636.0" y="604.9" width="7" height="5.7" fill="#00f0f0"/>
<line x1="647.5" y1="598" x2="647.5" y2="606.6" stroke="#ff4040" stroke-width="1.3"/><line x1="647.5" y1="609.6" x2="647.5" y2="611.9" stroke="#ff4040" stroke-width="1.3"/><rect x="644.5" y="606.6" width="6" height="3.0" fill="none" stroke="#ff4040" stroke-width="1.1"/>
<line x1="655.5" y1="615.7" x2="655.5" y2="620.1" stroke="#00f0f0" stroke-width="1.3"/><rect x="652.0" y="607.8" width="7" height="7.9" fill="#00f0f0"/>
<line x1="663.5" y1="616.7" x2="663.5" y2="618.9" stroke="#ff4040" stroke-width="1.3"/><rect x="660.5" y="611.3" width="6" height="5.4" fill="none" stroke="#ff4040" stroke-width="1.1"/>
<line x1="671.5" y1="603.7" x2="671.5" y2="610.4" stroke="#00f0f0" stroke-width="1.3"/><line x1="671.5" y1="612.9" x2="671.5" y2="615.7" stroke="#00f0f0" stroke-width="1.3"/><rect x="668.0" y="610.4" width="7" height="2.5" fill="#00f0f0"/>
<line x1="679.5" y1="616.7" x2="679.5" y2="623.9" stroke="#00f0f0" stroke-width="1.3"/><rect x="676.0" y="611.3" width="7" height="5.4" fill="#00f0f0"/>
<line x1="687.5" y1="614.7" x2="687.5" y2="617.6" stroke="#ff4040" stroke-width="1.3"/><rect x="684.5" y="606.2" width="6" height="8.5" fill="none" stroke="#ff4040" stroke-width="1.1"/>
<rect x="692.0" y="607.1" width="7" height="1.6" fill="#00f0f0"/>
<line x1="703.5" y1="611.3" x2="703.5" y2="615.7" stroke="#00f0f0" stroke-width="1.3"/><rect x="700.0" y="608.7" width="7" height="2.6" fill="#00f0f0"/>
<line x1="711.5" y1="600.3" x2="711.5" y2="604.3" stroke="#ff4040" stroke-width="1.3"/><rect x="708.5" y="604.3" width="6" height="5.7" fill="none" stroke="#ff4040" stroke-width="1.1"/>
<line x1="719.5" y1="604.3" x2="719.5" y2="606.8" stroke="#ff4040" stroke-width="1.3"/><rect x="716.5" y="600.3" width="6" height="4.0" fill="none" stroke="#ff4040" stroke-width="1.1"/>
<line x1="727.5" y1="599.2" x2="727.5" y2="600.3" stroke="#00f0f0" stroke-width="1.3"/><line x1="727.5" y1="603" x2="727.5" y2="606.8" stroke="#00f0f0" stroke-width="1.3"/><rect x="724.0" y="600.3" width="7" height="2.7" fill="#00f0f0"/>
<line x1="735.5" y1="601.8" x2="735.5" y2="606.8" stroke="#f0f0f0" stroke-width="1.3"/><line x1="732.0" y1="603.3" x2="739.0" y2="603.3" stroke="#f0f0f0" stroke-width="1.3"/>
<rect x="740.5" y="598" width="6" height="5.7" fill="none" stroke="#ff4040" stroke-width="1.1"/>
<line x1="751.5" y1="591" x2="751.5" y2="593.5" stroke="#ff4040" stroke-width="1.3"/><rect x="748.5" y="593.5" width="6" height="3.8" fill="none" stroke="#ff4040" stroke-width="1.1"/>
<line x1="759.5" y1="575.2" x2="759.5" y2="586.2" stroke="#ff4040" stroke-width="1.3"/><rect x="756.5" y="586.2" width="6" height="10.2" fill="none" stroke="#ff4040" stroke-width="1.1"/>
<line x1="767.5" y1="569.9" x2="767.5" y2="600.2" stroke="#ff4040" stroke-width="1.3"/><line x1="767.5" y1="620.7" x2="767.5" y2="628.3" stroke="#ff4040" stroke-width="1.3"/><rect x="764.5" y="600.2" width="6" height="20.5" fill="none" stroke="#ff4040" stroke-width="1.1"/>
<line x1="775.5" y1="590" x2="775.5" y2="601.4" stroke="#00f0f0" stroke-width="1.3"/><line x1="775.5" y1="611.6" x2="775.5" y2="616" stroke="#00f0f0" stroke-width="1.3"/><rect x="772.0" y="601.4" width="7" height="10.2" fill="#00f0f0"/>
<line x1="783.5" y1="599.9" x2="783.5" y2="610.9" stroke="#00f0f0" stroke-width="1.3"/><line x1="783.5" y1="625.5" x2="783.5" y2="627.4" stroke="#00f0f0" stroke-width="1.3"/><rect x="780.0" y="610.9" width="7" height="14.6" fill="#00f0f0"/>
<line x1="791.5" y1="615" x2="791.5" y2="625.5" stroke="#00f0f0" stroke-width="1.3"/><line x1="791.5" y1="673.9" x2="791.5" y2="685.3" stroke="#00f0f0" stroke-width="1.3"/><rect x="788.0" y="625.5" width="7" height="48.4" fill="#00f0f0"/>
<line x1="799.5" y1="658.7" x2="799.5" y2="673.9" stroke="#00f0f0" stroke-width="1.3"/><line x1="799.5" y1="700.1" x2="799.5" y2="701.5" stroke="#00f0f0" stroke-width="1.3"/><rect x="796.0" y="673.9" width="7" height="26.2" fill="#00f0f0"/>
<line x1="807.5" y1="675.8" x2="807.5" y2="698.2" stroke="#ff4040" stroke-width="1.3"/><line x1="807.5" y1="701.4" x2="807.5" y2="704.3" stroke="#ff4040" stroke-width="1.3"/><rect x="804.5" y="698.2" width="6" height="3.2" fill="none" stroke="#ff4040" stroke-width="1.1"/>
<line x1="815.5" y1="699.5" x2="815.5" y2="706.2" stroke="#ff4040" stroke-width="1.3"/><rect x="812.5" y="674.3" width="6" height="25.2" fill="none" stroke="#ff4040" stroke-width="1.1"/>
<line x1="823.5" y1="635" x2="823.5" y2="645.4" stroke="#ff4040" stroke-width="1.3"/><line x1="823.5" y1="674.3" x2="823.5" y2="685.3" stroke="#ff4040" stroke-width="1.3"/><rect x="820.5" y="645.4" width="6" height="28.9" fill="none" stroke="#ff4040" stroke-width="1.1"/>
<line x1="831.5" y1="617.9" x2="831.5" y2="626.4" stroke="#ff4040" stroke-width="1.3"/><line x1="831.5" y1="645.4" x2="831.5" y2="654" stroke="#ff4040" stroke-width="1.3"/><rect x="828.5" y="626.4" width="6" height="19.0" fill="none" stroke="#ff4040" stroke-width="1.1"/>
<line x1="839.5" y1="657.8" x2="839.5" y2="661.5" stroke="#00f0f0" stroke-width="1.3"/><rect x="836.0" y="628" width="7" height="29.8" fill="#00f0f0"/>
<line x1="847.5" y1="642.6" x2="847.5" y2="646.4" stroke="#ff4040" stroke-width="1.3"/><line x1="847.5" y1="657.2" x2="847.5" y2="665.4" stroke="#ff4040" stroke-width="1.3"/><rect x="844.5" y="646.4" width="6" height="10.8" fill="none" stroke="#ff4040" stroke-width="1.1"/>
<line x1="855.5" y1="609.4" x2="855.5" y2="626.4" stroke="#ff4040" stroke-width="1.3"/><line x1="855.5" y1="646.4" x2="855.5" y2="653" stroke="#ff4040" stroke-width="1.3"/><rect x="852.5" y="626.4" width="6" height="20.0" fill="none" stroke="#ff4040" stroke-width="1.1"/>
<line x1="863.5" y1="609" x2="863.5" y2="622.3" stroke="#ff4040" stroke-width="1.3"/><line x1="863.5" y1="627.4" x2="863.5" y2="639.7" stroke="#ff4040" stroke-width="1.3"/><rect x="860.5" y="622.3" width="6" height="5.1" fill="none" stroke="#ff4040" stroke-width="1.1"/>
<line x1="871.5" y1="613.2" x2="871.5" y2="622.3" stroke="#00f0f0" stroke-width="1.3"/><line x1="871.5" y1="634.4" x2="871.5" y2="640.7" stroke="#00f0f0" stroke-width="1.3"/><rect x="868.0" y="622.3" width="7" height="12.1" fill="#00f0f0"/>
<line x1="879.5" y1="605.2" x2="879.5" y2="617.3" stroke="#ff4040" stroke-width="1.3"/><rect x="876.5" y="617.3" width="6" height="15.8" fill="none" stroke="#ff4040" stroke-width="1.1"/>
<line x1="887.5" y1="614.1" x2="887.5" y2="621.1" stroke="#00f0f0" stroke-width="1.3"/><rect x="884.0" y="621.1" width="7" height="3.4" fill="#00f0f0"/>
<polyline points="119.4,622.5 127.7,616.2 135.3,613.7 159.3,613.7 173.2,606.7 191.0,598.5 197.3,598.9 216.3,606.7 226.4,615.6 241.6,625.7 256.8,633.3 269.4,639.0 279.6,646.0 297.3,654.8 320.0,657.3 335.0,652.3 342.7,648.6 355.3,647.1 380.6,647.3 390.8,650.9 400.9,657.5 413.5,663.8 423.7,671.4 437.6,651.1 450.3,634.7 462.9,608.1 471.8,601.8 481.9,601.8 489.5,608.1 500.9,619.5 517.3,624.6 527.5,620.8 538.9,603.0 550.0,594.2 560.2,587.8 569.0,576.5 576.6,572.7 593.1,567.0" fill="none" stroke="#f4f4f4" stroke-width="1.0" stroke-linejoin="round" />
<polyline points="604.5,567.0 618.4,569.5 627.3,576.5 641.2,589.7 652.6,600.5 664.0,610.6 677.9,614.4 690.6,613.8 707.0,610.0 722.2,603.0 737.4,603.0 750.1,595.4 765.0,590.4 774.0,591.3 783.5,600.8 792.0,620.7 800.6,666.3 812.0,703.3 823.3,713.8 844.2,673.9 855.6,654.0 864.2,649.6 870.8,652.6 878.4,639.7 886.9,634.0" fill="none" stroke="#f4f4f4" stroke-width="1.0" stroke-linejoin="round" />
<polyline points="119.4,633.3 134.0,627.6 153.0,620.0 182.1,607.3 218.8,606.7 242.8,613.7 256.8,619.4 279.6,635.8 317.5,651.0 335.0,652.3 349.0,653.4 383.2,648.0 406.0,654.3 423.7,659.4 443.9,651.1 462.9,636.0 481.9,623.9 504.7,614.4 532.5,611.9 550.0,608.7 558.9,606.8 583.0,586.0 607.0,572.0 621.0,571.4 646.3,580.3 658.9,589.1 681.7,603.0 703.2,610.6 712.1,611.3 734.9,607.5 752.6,601.1 765.0,596.7 781.6,598.9 794.9,615.0 808.2,637.8 821.4,654.9 830.9,662.5 844.2,677.7 853.7,681.5 863.2,682.4 870.8,676.7 886.9,653.4" fill="none" stroke="#00e000" stroke-width="1.0" stroke-linejoin="round" />
<polyline points="119.4,644.7 135.3,640.3 174.5,624.4 213.7,616.8 235.3,614.3 258.0,615.3 304.9,629.5 335.0,636.5 368.0,644.8 393.3,650.5 418.6,654.7 433.8,654.3 456.6,647.3 479.4,638.5 498.4,636.6 526.2,629.0 550.0,620.8 583.0,599.9 610.8,591.6 643.7,591.0 658.9,588.5 684.2,588.5 715.9,593.5 734.9,597.3 765.0,599.2 774.0,602.7 793.0,613.2 812.0,625.5 825.2,631.8 846.1,637.8 868.9,642.6 886.9,645.4" fill="none" stroke="#ff1a1a" stroke-width="1.0" stroke-linejoin="round" />
<text x="140" y="588" font-size="16" fill="#ff4a4a" stroke="#ff4a4a" stroke-width="0.3" textLength="49" lengthAdjust="spacingAndGlyphs" >27880</text>
<text x="495" y="587" font-size="16" fill="#ff4a4a" stroke="#ff4a4a" stroke-width="0.3" textLength="49" lengthAdjust="spacingAndGlyphs" >27915</text>
<path d="M547 575.5 H569" stroke="#ff4a4a" stroke-width="1" stroke-dasharray="2 2"/><path d="M551 572 L547 575.5 L551 579" fill="none" stroke="#ff4a4a" stroke-width="1"/>
<text x="688" y="587" font-size="16" fill="#ff4a4a" stroke="#ff4a4a" stroke-width="0.3" textLength="49" lengthAdjust="spacingAndGlyphs" >27916</text>
<path d="M739 575.5 H767" stroke="#ff4a4a" stroke-width="1" stroke-dasharray="2 2"/><path d="M743 572 L739 575.5 L743 579" fill="none" stroke="#ff4a4a" stroke-width="1"/>
<text x="373" y="683" font-size="16" fill="#00f0f0" stroke="#00f0f0" stroke-width="0.3" textLength="48" lengthAdjust="spacingAndGlyphs" >27781</text>
<text x="789" y="727" font-size="16" fill="#00f0f0" stroke="#00f0f0" stroke-width="0.3" textLength="49" lengthAdjust="spacingAndGlyphs" >27718</text>
<text x="117" y="727" font-size="16" fill="#e0e000" stroke="#e0e000" stroke-width="0.3" textLength="27" lengthAdjust="spacingAndGlyphs" >1天</text>
<text x="900" y="727" font-size="16" fill="#e0e000" stroke="#e0e000" stroke-width="0.3" textLength="65" lengthAdjust="spacingAndGlyphs" >4分35秒</text>
<line x1="938" y1="624.5" x2="967" y2="624.5" stroke="#e0e000" stroke-width="1.2"/>
<text x="120" y="755" font-size="16" fill="#f0f000" stroke="#f0f000" stroke-width="0.3" textLength="122" lengthAdjust="spacingAndGlyphs" >MACD(12,26,9)</text>
<path d="M245 749.8 L251 752.6 L257 749.8" fill="none" stroke="#e0e000" stroke-width="2" stroke-linejoin="miter"/>
<text x="272" y="755" font-size="16" fill="#f4f4f4" stroke="#f4f4f4" stroke-width="0.3" textLength="85" lengthAdjust="spacingAndGlyphs" >DIFF -6.19</text>
<text x="375" y="755" font-size="16" fill="#f0f000" stroke="#f0f000" stroke-width="0.3" textLength="91" lengthAdjust="spacingAndGlyphs" >DEA -12.30</text>
<text x="490" y="755" font-size="16" fill="#f4f4f4" stroke="#f4f4f4" stroke-width="0.3" textLength="45" lengthAdjust="spacingAndGlyphs" >12.24</text>
<line x1="117" y1="816.5" x2="966" y2="816.5" stroke="#a80404" stroke-width="1" stroke-dasharray="1 1"/>
<text x="112" y="823" font-size="18" fill="#9c9c9c" stroke="#9c9c9c" stroke-width="0" text-anchor="end" font-weight="bold" >0</text>
<line x1="117" y1="877.5" x2="966" y2="877.5" stroke="#a80404" stroke-width="1" stroke-dasharray="1 1"/>
<text x="112" y="884" font-size="18" fill="#9c9c9c" stroke="#9c9c9c" stroke-width="0" text-anchor="end" font-weight="bold" >-20</text>
<line x1="119.5" y1="816.5" x2="119.5" y2="774.3" stroke="#ff4040" stroke-width="1.3"/>
<line x1="127.5" y1="816.5" x2="127.5" y2="774.3" stroke="#ff4040" stroke-width="1.3"/>
<line x1="135.5" y1="816.5" x2="135.5" y2="781" stroke="#ff4040" stroke-width="1.3"/>
<line x1="143.5" y1="816.5" x2="143.5" y2="788.1" stroke="#ff4040" stroke-width="1.3"/>
<line x1="151.5" y1="816.5" x2="151.5" y2="791.2" stroke="#ff4040" stroke-width="1.3"/>
<line x1="159.5" y1="816.5" x2="159.5" y2="788.1" stroke="#ff4040" stroke-width="1.3"/>
<line x1="167.5" y1="816.5" x2="167.5" y2="785.1" stroke="#ff4040" stroke-width="1.3"/>
<line x1="175.5" y1="816.5" x2="175.5" y2="789.2" stroke="#ff4040" stroke-width="1.3"/>
<line x1="183.5" y1="816.5" x2="183.5" y2="791.2" stroke="#ff4040" stroke-width="1.3"/>
<line x1="191.5" y1="816.5" x2="191.5" y2="795.3" stroke="#ff4040" stroke-width="1.3"/>
<line x1="199.5" y1="816.5" x2="199.5" y2="801.8" stroke="#ff4040" stroke-width="1.3"/>
<line x1="207.5" y1="816.5" x2="207.5" y2="807.9" stroke="#ff4040" stroke-width="1.3"/>
<line x1="223.5" y1="816.5" x2="223.5" y2="824.2" stroke="#00f0f0" stroke-width="1.3"/>
<line x1="231.5" y1="816.5" x2="231.5" y2="831.8" stroke="#00f0f0" stroke-width="1.3"/>
<line x1="239.5" y1="816.5" x2="239.5" y2="832.8" stroke="#00f0f0" stroke-width="1.3"/>
<line x1="247.5" y1="816.5" x2="247.5" y2="833.8" stroke="#00f0f0" stroke-width="1.3"/>
<line x1="255.5" y1="816.5" x2="255.5" y2="838.5" stroke="#00f0f0" stroke-width="1.3"/>
<line x1="263.5" y1="816.5" x2="263.5" y2="843.6" stroke="#00f0f0" stroke-width="1.3"/>
<line x1="271.5" y1="816.5" x2="271.5" y2="844.6" stroke="#00f0f0" stroke-width="1.3"/>
<line x1="279.5" y1="816.5" x2="279.5" y2="846.6" stroke="#00f0f0" stroke-width="1.3"/>
<line x1="287.5" y1="816.5" x2="287.5" y2="845.6" stroke="#00f0f0" stroke-width="1.3"/>
<line x1="295.5" y1="816.5" x2="295.5" y2="844.6" stroke="#00f0f0" stroke-width="1.3"/>
<line x1="303.5" y1="816.5" x2="303.5" y2="843.6" stroke="#00f0f0" stroke-width="1.3"/>
<line x1="311.5" y1="816.5" x2="311.5" y2="838.5" stroke="#00f0f0" stroke-width="1.3"/>
<line x1="319.5" y1="816.5" x2="319.5" y2="835" stroke="#00f0f0" stroke-width="1.3"/>
<line x1="327.5" y1="816.5" x2="327.5" y2="824.8" stroke="#00f0f0" stroke-width="1.3"/>
<line x1="335.5" y1="816.5" x2="335.5" y2="818.7" stroke="#00f0f0" stroke-width="1.3"/>
<line x1="343.5" y1="816.5" x2="343.5" y2="817.5" stroke="#00f0f0" stroke-width="1.3"/>
<line x1="351.5" y1="816.5" x2="351.5" y2="817.5" stroke="#00f0f0" stroke-width="1.3"/>
<line x1="367.5" y1="816.5" x2="367.5" y2="812" stroke="#ff4040" stroke-width="1.3"/>
<line x1="375.5" y1="816.5" x2="375.5" y2="810" stroke="#ff4040" stroke-width="1.3"/>
<line x1="383.5" y1="816.5" x2="383.5" y2="810" stroke="#ff4040" stroke-width="1.3"/>
<line x1="391.5" y1="816.5" x2="391.5" y2="819.1" stroke="#00f0f0" stroke-width="1.3"/>
<line x1="399.5" y1="816.5" x2="399.5" y2="824.8" stroke="#00f0f0" stroke-width="1.3"/>
<line x1="407.5" y1="816.5" x2="407.5" y2="823.8" stroke="#00f0f0" stroke-width="1.3"/>
<line x1="415.5" y1="816.5" x2="415.5" y2="821.8" stroke="#00f0f0" stroke-width="1.3"/>
<line x1="423.5" y1="816.5" x2="423.5" y2="825.6" stroke="#00f0f0" stroke-width="1.3"/>
<line x1="431.5" y1="816.5" x2="431.5" y2="810" stroke="#ff4040" stroke-width="1.3"/>
<line x1="439.5" y1="816.5" x2="439.5" y2="793.2" stroke="#ff4040" stroke-width="1.3"/>
<line x1="447.5" y1="816.5" x2="447.5" y2="782" stroke="#ff4040" stroke-width="1.3"/>
<line x1="455.5" y1="816.5" x2="455.5" y2="774.3" stroke="#ff4040" stroke-width="1.3"/>
<line x1="463.5" y1="816.5" x2="463.5" y2="769.2" stroke="#ff4040" stroke-width="1.3"/>
<line x1="471.5" y1="816.5" x2="471.5" y2="770.2" stroke="#ff4040" stroke-width="1.3"/>
<line x1="479.5" y1="816.5" x2="479.5" y2="777.3" stroke="#ff4040" stroke-width="1.3"/>
<line x1="487.5" y1="816.5" x2="487.5" y2="790.2" stroke="#ff4040" stroke-width="1.3"/>
<line x1="495.5" y1="816.5" x2="495.5" y2="806.5" stroke="#ff4040" stroke-width="1.3"/>
<line x1="503.5" y1="816.5" x2="503.5" y2="811" stroke="#ff4040" stroke-width="1.3"/>
<line x1="511.5" y1="816.5" x2="511.5" y2="807.9" stroke="#ff4040" stroke-width="1.3"/>
<line x1="519.5" y1="816.5" x2="519.5" y2="808.9" stroke="#ff4040" stroke-width="1.3"/>
<line x1="527.5" y1="816.5" x2="527.5" y2="808.9" stroke="#ff4040" stroke-width="1.3"/>
<line x1="535.5" y1="816.5" x2="535.5" y2="800.8" stroke="#ff4040" stroke-width="1.3"/>
<line x1="543.5" y1="816.5" x2="543.5" y2="794.7" stroke="#ff4040" stroke-width="1.3"/>
<line x1="551.5" y1="816.5" x2="551.5" y2="793" stroke="#ff4040" stroke-width="1.3"/>
<line x1="559.5" y1="816.5" x2="559.5" y2="793" stroke="#ff4040" stroke-width="1.3"/>
<line x1="567.5" y1="816.5" x2="567.5" y2="788.1" stroke="#ff4040" stroke-width="1.3"/>
<line x1="575.5" y1="816.5" x2="575.5" y2="788.1" stroke="#ff4040" stroke-width="1.3"/>
<line x1="583.5" y1="816.5" x2="583.5" y2="790.2" stroke="#ff4040" stroke-width="1.3"/>
<line x1="591.5" y1="816.5" x2="591.5" y2="796.1" stroke="#ff4040" stroke-width="1.3"/>
<line x1="599.5" y1="816.5" x2="599.5" y2="798.1" stroke="#ff4040" stroke-width="1.3"/>
<line x1="607.5" y1="816.5" x2="607.5" y2="808.3" stroke="#ff4040" stroke-width="1.3"/>
<line x1="615.5" y1="816.5" x2="615.5" y2="812" stroke="#ff4040" stroke-width="1.3"/>
<line x1="623.5" y1="816.5" x2="623.5" y2="820.1" stroke="#00f0f0" stroke-width="1.3"/>
<line x1="631.5" y1="816.5" x2="631.5" y2="833.8" stroke="#00f0f0" stroke-width="1.3"/>
<line x1="639.5" y1="816.5" x2="639.5" y2="843.6" stroke="#00f0f0" stroke-width="1.3"/>
<line x1="647.5" y1="816.5" x2="647.5" y2="847.7" stroke="#00f0f0" stroke-width="1.3"/>
<line x1="655.5" y1="816.5" x2="655.5" y2="854.8" stroke="#00f0f0" stroke-width="1.3"/>
<line x1="663.5" y1="816.5" x2="663.5" y2="854.8" stroke="#00f0f0" stroke-width="1.3"/>
<line x1="671.5" y1="816.5" x2="671.5" y2="853.8" stroke="#00f0f0" stroke-width="1.3"/>
<line x1="679.5" y1="816.5" x2="679.5" y2="854.8" stroke="#00f0f0" stroke-width="1.3"/>
<line x1="687.5" y1="816.5" x2="687.5" y2="846.6" stroke="#00f0f0" stroke-width="1.3"/>
<line x1="695.5" y1="816.5" x2="695.5" y2="842" stroke="#00f0f0" stroke-width="1.3"/>
<line x1="703.5" y1="816.5" x2="703.5" y2="839.9" stroke="#00f0f0" stroke-width="1.3"/>
<line x1="711.5" y1="816.5" x2="711.5" y2="832.8" stroke="#00f0f0" stroke-width="1.3"/>
<line x1="719.5" y1="816.5" x2="719.5" y2="825.6" stroke="#00f0f0" stroke-width="1.3"/>
<line x1="727.5" y1="816.5" x2="727.5" y2="822.8" stroke="#00f0f0" stroke-width="1.3"/>
<line x1="735.5" y1="816.5" x2="735.5" y2="820.1" stroke="#00f0f0" stroke-width="1.3"/>
<line x1="751.5" y1="816.5" x2="751.5" y2="812" stroke="#ff4040" stroke-width="1.3"/>
<line x1="759.5" y1="816.5" x2="759.5" y2="804.9" stroke="#ff4040" stroke-width="1.3"/>
<line x1="767.5" y1="816.5" x2="767.5" y2="808.9" stroke="#ff4040" stroke-width="1.3"/>
<line x1="775.5" y1="816.5" x2="775.5" y2="817.5" stroke="#00f0f0" stroke-width="1.3"/>
<line x1="783.5" y1="816.5" x2="783.5" y2="830.7" stroke="#00f0f0" stroke-width="1.3"/>
<line x1="791.5" y1="816.5" x2="791.5" y2="866" stroke="#00f0f0" stroke-width="1.3"/>
<line x1="799.5" y1="816.5" x2="799.5" y2="899.7" stroke="#00f0f0" stroke-width="1.3"/>
<line x1="807.5" y1="816.5" x2="807.5" y2="915" stroke="#00f0f0" stroke-width="1.3"/>
<line x1="815.5" y1="816.5" x2="815.5" y2="905.8" stroke="#00f0f0" stroke-width="1.3"/>
<line x1="823.5" y1="816.5" x2="823.5" y2="878.2" stroke="#00f0f0" stroke-width="1.3"/>
<line x1="831.5" y1="816.5" x2="831.5" y2="846.6" stroke="#00f0f0" stroke-width="1.3"/>
<line x1="839.5" y1="816.5" x2="839.5" y2="842" stroke="#00f0f0" stroke-width="1.3"/>
<line x1="847.5" y1="816.5" x2="847.5" y2="830.9" stroke="#00f0f0" stroke-width="1.3"/>
<line x1="855.5" y1="816.5" x2="855.5" y2="811" stroke="#ff4040" stroke-width="1.3"/>
<line x1="863.5" y1="816.5" x2="863.5" y2="796.1" stroke="#ff4040" stroke-width="1.3"/>
<line x1="871.5" y1="816.5" x2="871.5" y2="793" stroke="#ff4040" stroke-width="1.3"/>
<line x1="879.5" y1="816.5" x2="879.5" y2="782" stroke="#ff4040" stroke-width="1.3"/>
<line x1="887.5" y1="816.5" x2="887.5" y2="780" stroke="#ff4040" stroke-width="1.3"/>
<polyline points="119.5,815.0 131.3,809.5 149.7,808.5 166.0,796.7 190.4,792.2 208.8,795.7 229.2,808.9 247.5,815.0 263.8,827.3 286.3,839.5 302.6,845.6 318.9,845.6 331.1,839.9 351.5,837.5 367.8,833.8 380.0,831.4 398.4,839.9 416.7,841.5 422.8,844.6 445.3,814.0 469.7,789.6 477.9,788.5 494.2,796.7 500.0,798.7 526.5,795.7 540.8,785.5 559.1,776.3 571.4,767.7 583.6,763.5 597.9,763.5 610.0,767.1 620.3,770.2 638.6,788.5 655.0,803.8 675.3,816.1 683.5,819.5 703.9,820.8 724.3,817.1 744.6,814.0 761.0,806.5 773.2,808.9 783.4,819.1 791.5,837.5 801.7,872.1 815.0,897.6 824.2,892.5 831.3,880.7 838.4,881.3 846.6,876.2 864.9,854.8 874.1,849.7 886.3,836.5" fill="none" stroke="#f0f0f0" stroke-width="1.0" stroke-linejoin="round" />
<polyline points="119.5,837.5 139.5,825.2 168.0,813.0 196.5,801.8 210.8,800.4 227.1,801.8 257.7,810.0 288.3,824.2 314.8,835.4 339.3,837.9 359.7,837.5 382.1,835.4 400.4,837.5 426.9,839.1 445.3,832.4 471.8,813.4 488.1,804.9 500.0,802.8 534.7,797.7 561.2,785.5 591.7,774.3 614.2,770.2 642.7,778.3 673.3,795.7 697.8,807.9 720.2,814.0 744.6,814.6 765.0,811.4 781.3,813.4 795.6,825.2 809.9,845.6 824.2,860.9 842.5,869.1 856.8,869.1 871.1,863.0 886.3,854.2" fill="none" stroke="#e0e000" stroke-width="1.0" stroke-linejoin="round" />
</svg>
<svg class="a" style="left:0;top:0" width="1913" height="948" font-family="Liberation Sans">
<g transform="translate(983,91)"><path d="M9.7 3.5 H1.8 Q0.3 3.5 0.3 5 V8.2 Q0.3 9.7 1.8 9.7 H10 M7.5 0.3 L15.9 13.2 M14 3.5 H21.7 Q23.2 3.5 23.2 5 V8.2 Q23.2 9.7 21.7 9.7 H16" fill="none" stroke="#b4b4b4" stroke-width="1.6"/></g>
<text x="1015" y="103" font-size="17" fill="#dcdcdc" stroke="#dcdcdc" stroke-width="0" textLength="177" lengthAdjust="spacingAndGlyphs" >麦当劳(美国股票 MCD)</text>
<text x="1212" y="103" font-size="17" fill="#dcdcdc" stroke="#dcdcdc" stroke-width="0" textLength="43" lengthAdjust="spacingAndGlyphs" >3分钟</text>
<path d="M1262 95.8 L1268 98.6 L1274 95.8" fill="none" stroke="#e6e6e6" stroke-width="2" stroke-linejoin="miter"/>
<g transform="translate(1845,87)" fill="none" stroke="#0fa0ea" stroke-width="1.5"><path d="M6.2 0.8 H15.7 L10 6.8 H14.8 M6.2 0.8 L0.7 11.2 H7.5 L2.8 21 L11.5 11"/><path d="M9 9.5 H23 M15.3 9.5 V21.7"/><path d="M18 14 L21.7 17.6" stroke-dasharray="1.2 1"/><circle cx="27.7" cy="7.4" r="0.7" fill="#0fa0ea"/><circle cx="34" cy="7.4" r="0.7" fill="#0fa0ea"/><rect x="26.2" y="9.9" width="10.4" height="6.2"/><path d="M26.2 13 H36.6 M31.4 9.9 V21.7 M24 19.8 H37.9"/></g>
<line x1="977" y1="111.5" x2="1905" y2="111.5" stroke="#d81810" stroke-width="1.3"/>
<rect x="1905.5" y="86.5" width="4" height="858" rx="0.5" fill="none" stroke="#d81810" stroke-width="1.3"/>
<line x1="1052.5" y1="111" x2="1052.5" y2="918" stroke="#d81810" stroke-width="1.3"/>
<line x1="1052" y1="918.5" x2="1905" y2="918.5" stroke="#d81810" stroke-width="1.3"/>
<line x1="1053" y1="860.5" x2="1905" y2="860.5" stroke="#a80404" stroke-width="1" stroke-dasharray="1 1"/>
<text x="1050" y="867" font-size="18" fill="#9c9c9c" stroke="#9c9c9c" stroke-width="0" text-anchor="end" font-weight="bold" >0</text>
<line x1="1056.6" y1="860.5" x2="1056.6" y2="855" stroke="#ff4040" stroke-width="1.2"/>
<line x1="1064.6" y1="860.5" x2="1064.6" y2="857" stroke="#ff4040" stroke-width="1.2"/>
<line x1="1072.6" y1="860.5" x2="1072.6" y2="855" stroke="#ff4040" stroke-width="1.2"/>
<line x1="1080.6" y1="860.5" x2="1080.6" y2="857" stroke="#ff4040" stroke-width="1.2"/>
<line x1="1088.6" y1="860.5" x2="1088.6" y2="855" stroke="#ff4040" stroke-width="1.2"/>
<line x1="1096.6" y1="860.5" x2="1096.6" y2="857" stroke="#ff4040" stroke-width="1.2"/>
<line x1="1104.6" y1="860.5" x2="1104.6" y2="855" stroke="#ff4040" stroke-width="1.2"/>
<line x1="1112.6" y1="860.5" x2="1112.6" y2="857" stroke="#ff4040" stroke-width="1.2"/>
<line x1="1120.6" y1="860.5" x2="1120.6" y2="855" stroke="#ff4040" stroke-width="1.2"/>
<line x1="1128.6" y1="860.5" x2="1128.6" y2="857" stroke="#ff4040" stroke-width="1.2"/>
<line x1="1136.6" y1="860.5" x2="1136.6" y2="855" stroke="#ff4040" stroke-width="1.2"/>
<line x1="1144.6" y1="860.5" x2="1144.6" y2="857" stroke="#ff4040" stroke-width="1.2"/>
<line x1="1152.6" y1="860.5" x2="1152.6" y2="855" stroke="#ff4040" stroke-width="1.2"/>
<line x1="1160.6" y1="860.5" x2="1160.6" y2="857" stroke="#ff4040" stroke-width="1.2"/>
<line x1="1168.6" y1="860.5" x2="1168.6" y2="855" stroke="#ff4040" stroke-width="1.2"/>
<line x1="1176.6" y1="860.5" x2="1176.6" y2="857" stroke="#ff4040" stroke-width="1.2"/>
<line x1="1184.6" y1="860.5" x2="1184.6" y2="855" stroke="#ff4040" stroke-width="1.2"/>
<line x1="1192.6" y1="860.5" x2="1192.6" y2="857" stroke="#ff4040" stroke-width="1.2"/>
<line x1="1200.6" y1="860.5" x2="1200.6" y2="855" stroke="#ff4040" stroke-width="1.2"/>
<line x1="1208.6" y1="860.5" x2="1208.6" y2="857" stroke="#ff4040" stroke-width="1.2"/>
<line x1="1216.6" y1="860.5" x2="1216.6" y2="855" stroke="#ff4040" stroke-width="1.2"/>
<line x1="1224.6" y1="860.5" x2="1224.6" y2="857" stroke="#ff4040" stroke-width="1.2"/>
<line x1="1232.6" y1="860.5" x2="1232.6" y2="855" stroke="#ff4040" stroke-width="1.2"/>
<line x1="1240.6" y1="860.5" x2="1240.6" y2="857" stroke="#ff4040" stroke-width="1.2"/>
<line x1="1248.6" y1="860.5" x2="1248.6" y2="855" stroke="#ff4040" stroke-width="1.2"/>
<line x1="1256.6" y1="860.5" x2="1256.6" y2="862.5" stroke="#00f0f0" stroke-width="1.2"/>
<line x1="1264.6" y1="860.5" x2="1264.6" y2="863.5" stroke="#00f0f0" stroke-width="1.2"/>
<line x1="1272.6" y1="860.5" x2="1272.6" y2="865.5" stroke="#00f0f0" stroke-width="1.2"/>
<line x1="1288.6" y1="860.5" x2="1288.6" y2="857.5" stroke="#ff4040" stroke-width="1.2"/>
<line x1="1296.6" y1="860.5" x2="1296.6" y2="857.5" stroke="#ff4040" stroke-width="1.2"/>
<line x1="1304.6" y1="860.5" x2="1304.6" y2="857.5" stroke="#ff4040" stroke-width="1.2"/>
<line x1="1312.6" y1="860.5" x2="1312.6" y2="857.5" stroke="#ff4040" stroke-width="1.2"/>
<line x1="1320.6" y1="860.5" x2="1320.6" y2="857.5" stroke="#ff4040" stroke-width="1.2"/>
<line x1="1328.6" y1="860.5" x2="1328.6" y2="857.5" stroke="#ff4040" stroke-width="1.2"/>
<line x1="1336.6" y1="860.5" x2="1336.6" y2="855" stroke="#ff4040" stroke-width="1.2"/>
<line x1="1344.6" y1="860.5" x2="1344.6" y2="855" stroke="#ff4040" stroke-width="1.2"/>
<line x1="1352.6" y1="860.5" x2="1352.6" y2="855" stroke="#ff4040" stroke-width="1.2"/>
<line x1="1360.6" y1="860.5" x2="1360.6" y2="855" stroke="#ff4040" stroke-width="1.2"/>
<line x1="1368.6" y1="860.5" x2="1368.6" y2="855" stroke="#ff4040" stroke-width="1.2"/>
<line x1="1376.6" y1="860.5" x2="1376.6" y2="855" stroke="#ff4040" stroke-width="1.2"/>
<line x1="1384.6" y1="860.5" x2="1384.6" y2="855" stroke="#ff4040" stroke-width="1.2"/>
<line x1="1392.6" y1="860.5" x2="1392.6" y2="855" stroke="#ff4040" stroke-width="1.2"/>
<line x1="1400.6" y1="860.5" x2="1400.6" y2="855" stroke="#ff4040" stroke-width="1.2"/>
<line x1="1408.6" y1="860.5" x2="1408.6" y2="855" stroke="#ff4040" stroke-width="1.2"/>
<line x1="1416.6" y1="860.5" x2="1416.6" y2="855" stroke="#ff4040" stroke-width="1.2"/>
<line x1="1424.6" y1="860.5" x2="1424.6" y2="855" stroke="#ff4040" stroke-width="1.2"/>
<line x1="1432.6" y1="860.5" x2="1432.6" y2="855" stroke="#ff4040" stroke-width="1.2"/>
<line x1="1440.6" y1="860.5" x2="1440.6" y2="855" stroke="#ff4040" stroke-width="1.2"/>
<line x1="1448.6" y1="860.5" x2="1448.6" y2="855" stroke="#ff4040" stroke-width="1.2"/>
<line x1="1456.6" y1="860.5" x2="1456.6" y2="855" stroke="#ff4040" stroke-width="1.2"/>
<line x1="1464.6" y1="860.5" x2="1464.6" y2="855" stroke="#ff4040" stroke-width="1.2"/>
<line x1="1472.2" y1="860.5" x2="1472.2" y2="867.6" stroke="#00f0f0" stroke-width="1.2"/>
<line x1="1480.2" y1="860.5" x2="1480.2" y2="878.7" stroke="#00f0f0" stroke-width="1.2"/>
<line x1="1488.2" y1="860.5" x2="1488.2" y2="888.6" stroke="#00f0f0" stroke-width="1.2"/>
<line x1="1496.2" y1="860.5" x2="1496.2" y2="897.2" stroke="#00f0f0" stroke-width="1.2"/>
<line x1="1504.2" y1="860.5" x2="1504.2" y2="903.4" stroke="#00f0f0" stroke-width="1.2"/>
<line x1="1512.2" y1="860.5" x2="1512.2" y2="904.7" stroke="#00f0f0" stroke-width="1.2"/>
<line x1="1520.2" y1="860.5" x2="1520.2" y2="906.4" stroke="#00f0f0" stroke-width="1.2"/>
<line x1="1528.2" y1="860.5" x2="1528.2" y2="903.9" stroke="#00f0f0" stroke-width="1.2"/>
<line x1="1536.2" y1="860.5" x2="1536.2" y2="899.7" stroke="#00f0f0" stroke-width="1.2"/>
<line x1="1544.2" y1="860.5" x2="1544.2" y2="896" stroke="#00f0f0" stroke-width="1.2"/>
<line x1="1552.2" y1="860.5" x2="1552.2" y2="892.3" stroke="#00f0f0" stroke-width="1.2"/>
<line x1="1560.2" y1="860.5" x2="1560.2" y2="886.6" stroke="#00f0f0" stroke-width="1.2"/>
<line x1="1568.2" y1="860.5" x2="1568.2" y2="882.4" stroke="#00f0f0" stroke-width="1.2"/>
<line x1="1576.2" y1="860.5" x2="1576.2" y2="878.2" stroke="#00f0f0" stroke-width="1.2"/>
<line x1="1584.2" y1="860.5" x2="1584.2" y2="875" stroke="#00f0f0" stroke-width="1.2"/>
<line x1="1592.2" y1="860.5" x2="1592.2" y2="872.5" stroke="#00f0f0" stroke-width="1.2"/>
<line x1="1600.2" y1="860.5" x2="1600.2" y2="873.7" stroke="#00f0f0" stroke-width="1.2"/>
<line x1="1608.2" y1="860.5" x2="1608.2" y2="875" stroke="#00f0f0" stroke-width="1.2"/>
<line x1="1616.2" y1="860.5" x2="1616.2" y2="876.2" stroke="#00f0f0" stroke-width="1.2"/>
<line x1="1624.2" y1="860.5" x2="1624.2" y2="877.5" stroke="#00f0f0" stroke-width="1.2"/>
<line x1="1632.2" y1="860.5" x2="1632.2" y2="875" stroke="#00f0f0" stroke-width="1.2"/>
<line x1="1640.2" y1="860.5" x2="1640.2" y2="874.2" stroke="#00f0f0" stroke-width="1.2"/>
<line x1="1648.2" y1="860.5" x2="1648.2" y2="872.5" stroke="#00f0f0" stroke-width="1.2"/>
<line x1="1656.2" y1="860.5" x2="1656.2" y2="874.2" stroke="#00f0f0" stroke-width="1.2"/>
<line x1="1664.2" y1="860.5" x2="1664.2" y2="874.2" stroke="#00f0f0" stroke-width="1.2"/>
<line x1="1672.2" y1="860.5" x2="1672.2" y2="867.6" stroke="#00f0f0" stroke-width="1.2"/>
<line x1="1680.2" y1="860.5" x2="1680.2" y2="862.6" stroke="#00f0f0" stroke-width="1.2"/>
<line x1="1688.2" y1="860.5" x2="1688.2" y2="863.9" stroke="#00f0f0" stroke-width="1.2"/>
<line x1="1704.6" y1="860.5" x2="1704.6" y2="855" stroke="#ff4040" stroke-width="1.2"/>
<line x1="1712.6" y1="860.5" x2="1712.6" y2="857" stroke="#ff4040" stroke-width="1.2"/>
<line x1="1720.6" y1="860.5" x2="1720.6" y2="855" stroke="#ff4040" stroke-width="1.2"/>
<line x1="1728.6" y1="860.5" x2="1728.6" y2="857" stroke="#ff4040" stroke-width="1.2"/>
<line x1="1736.6" y1="860.5" x2="1736.6" y2="855" stroke="#ff4040" stroke-width="1.2"/>
<line x1="1768.4" y1="860.5" x2="1768.4" y2="862" stroke="#00f0f0" stroke-width="1.2"/>
<line x1="1776.4" y1="860.5" x2="1776.4" y2="862" stroke="#00f0f0" stroke-width="1.2"/>
<line x1="1792.4" y1="860.5" x2="1792.4" y2="875" stroke="#00f0f0" stroke-width="1.2"/>
<line x1="1800.3" y1="860.5" x2="1800.3" y2="873.7" stroke="#00f0f0" stroke-width="1.2"/>
<line x1="1808.4" y1="860.5" x2="1808.4" y2="870" stroke="#00f0f0" stroke-width="1.2"/>
<line x1="1816.4" y1="860.5" x2="1816.4" y2="867.6" stroke="#00f0f0" stroke-width="1.2"/>
<line x1="1824.5" y1="860.5" x2="1824.5" y2="866.3" stroke="#00f0f0" stroke-width="1.2"/>
<polyline points="1056.0,914.9 1079.0,910.3 1099.8,909.3 1115.9,902.9 1136.6,893.7 1168.8,882.2 1189.5,874.1 1201.0,874.1 1230.9,866.6 1253.9,873.0 1272.3,874.8 1286.0,871.8 1328.6,871.8 1341.3,854.6" fill="none" stroke="#f0f0f0" stroke-width="1.1" stroke-linejoin="round" />
<polyline points="1056.0,915.3 1104.4,912.1 1136.6,904.0 1168.8,894.2 1191.8,884.5 1217.1,878.7 1235.5,873.5 1270.0,873.5 1328.6,871.8 1343.6,866.1 1360.8,855.1" fill="none" stroke="#e0e000" stroke-width="1.1" stroke-linejoin="round" />
<polyline points="1639.0,855.2 1663.8,860.1 1697.0,855.2" fill="none" stroke="#f0f0f0" stroke-width="1.1" stroke-linejoin="round" />
<polyline points="1786.2,855.2 1792.4,860.1 1823.3,861.4" fill="none" stroke="#f0f0f0" stroke-width="1.1" stroke-linejoin="round" />
<polyline points="1799.8,855.2 1823.3,859.0" fill="none" stroke="#e0e000" stroke-width="1.1" stroke-linejoin="round" />
<line x1="1532.5" y1="903" x2="1532.5" y2="918" stroke="#9a9a9a" stroke-width="1"/>
<text x="1069" y="939" font-size="17" fill="#a0a0a0" stroke="#a0a0a0" stroke-width="0" textLength="46" lengthAdjust="spacingAndGlyphs" >09/24</text>
<text x="1317" y="939" font-size="17" fill="#a0a0a0" stroke="#a0a0a0" stroke-width="0" textLength="46" lengthAdjust="spacingAndGlyphs" >09/26</text>
<text x="1517" y="939" font-size="17" fill="#a0a0a0" stroke="#a0a0a0" stroke-width="0" textLength="46" lengthAdjust="spacingAndGlyphs" >09/26</text>
</svg>
<div class="a dlg"></div>
<div class="a" style="left:993px;top:117px;width:920px;height:44px;background:#fff"></div>
<svg class="a" style="left:1004px;top:128px" width="23" height="19"><defs><linearGradient id="ig" x1="0" y1="0" x2="1" y2="1"><stop offset="0" stop-color="#3a7ab8"/><stop offset="1" stop-color="#6ab86a"/></linearGradient></defs>
<rect x="0.5" y="0.5" width="22" height="18" rx="2" fill="#e6ebef" stroke="#9aa4ad"/>
<rect x="3" y="4" width="11" height="11" fill="url(#ig)"/><rect x="15" y="3.5" width="5" height="12" fill="#f4f4f4"/><rect x="18.5" y="4" width="1.5" height="6" fill="#5a8ad0"/></svg>
<div class="a" style="left:1033px;top:128px;font-size:18px;line-height:20px;color:#000">指标公式编辑器</div>
<div class="a" style="left:1804px;top:138px;width:14px;height:1px;background:#bbb"></div>
<div class="a" style="left:1873px;top:131px;width:14px;height:14px;border:1.5px solid #000"></div>
<div class="a lbl" style="left:1014px;top:179px">名称</div>
<div class="a" style="left:1063px;top:175px;width:140px;height:31px;background:#f0f0f0;border:1px solid #cfcfcf;border-left-color:#a0a0a0;border-top-color:#a0a0a0"></div>
<div class="a" style="left:1065px;top:176px;font-size:17px;line-height:20px;color:#8a8a8a;font-family:'Liberation Mono',monospace">DIF测试</div>
<div class="a lbl" style="left:1014px;top:221px">描述</div>
<div class="a" style="left:1063px;top:217px;width:432px;height:32px;background:#fff;border:1px solid #7a7a7a"></div>
<div class="a lbl" style="left:1014px;top:261px">属性</div>
<div class="a" style="left:1063px;top:258px;width:155px;height:26px;background:#e1e1e1;border:1px solid #adadad"></div>
<div class="a" style="left:1067px;top:261px;font-size:17px;line-height:20px;color:#111">副图指标</div>
<svg class="a" style="left:1198px;top:265px" width="13" height="8"><path d="M1 1 L6 6 L11 1" fill="none" stroke="#333" stroke-width="1.2"/></svg>
<div class="a" style="left:1010px;top:336px;font-size:17px;line-height:20px;color:#3434c8;letter-spacing:1.05px">点击进入麦语言论坛，向文华技术人员提问你遇到的问题</div>
<div class="a" style="left:1571px;top:170px;width:342px;height:184px;background:#fff;border-left:1px solid #a0a0a0;border-top:1px solid #a0a0a0;overflow:hidden">
<div class="a" style="left:0;top:0;width:342px;height:35px;background:#f0f0f0"></div>
<div class="a" style="left:0;top:35px;width:69px;height:160px;background:#f0f0f0"></div>
<div class="a" style="left:0px;top:0;width:69px;height:35px;line-height:35px;text-align:center;font-size:17px;color:#111">参数</div>
<div class="a" style="left:68px;top:0;width:1px;height:200px;background:#d4d4d4"></div>
<div class="a" style="left:69px;top:0;width:75px;height:35px;line-height:35px;text-align:center;font-size:17px;color:#111">名称</div>
<div class="a" style="left:143px;top:0;width:1px;height:200px;background:#d4d4d4"></div>
<div class="a" style="left:144px;top:0;width:80px;height:35px;line-height:35px;text-align:center;font-size:17px;color:#111">最小值</div>
<div class="a" style="left:223px;top:0;width:1px;height:200px;background:#d4d4d4"></div>
<div class="a" style="left:224px;top:0;width:80px;height:35px;line-height:35px;text-align:center;font-size:17px;color:#111">最大值</div>
<div class="a" style="left:303px;top:0;width:1px;height:200px;background:#d4d4d4"></div>
<div class="a" style="left:310px;top:0;height:35px;line-height:35px;font-size:17px;color:#111">当前</div>
<div class="a" style="left:383px;top:0;width:1px;height:200px;background:#d4d4d4"></div>
<div class="a" style="left:0;top:34px;width:342px;height:1px;background:#d4d4d4"></div>
<div class="a" style="left:0;top:35px;width:69px;height:36px;line-height:36px;text-align:center;font-size:17px;color:#111;font-family:'Liberation Serif',serif">1</div>
<div class="a" style="left:149px;top:35px;height:36px;line-height:36px;font-size:17px;color:#111;font-family:'Liberation Serif',serif">0</div>
<div class="a" style="left:229px;top:35px;height:36px;line-height:36px;font-size:17px;color:#111;font-family:'Liberation Serif',serif">0</div>
<div class="a" style="left:309px;top:35px;height:36px;line-height:36px;font-size:17px;color:#111;font-family:'Liberation Serif',serif">0</div>
<div class="a" style="left:0;top:70px;width:342px;height:1px;background:#d4d4d4"></div>
<div class="a" style="left:0;top:71px;width:69px;height:36px;line-height:36px;text-align:center;font-size:17px;color:#111;font-family:'Liberation Serif',serif">2</div>
<div class="a" style="left:149px;top:71px;height:36px;line-height:36px;font-size:17px;color:#111;font-family:'Liberation Serif',serif">0</div>
<div class="a" style="left:229px;top:71px;height:36px;line-height:36px;font-size:17px;color:#111;font-family:'Liberation Serif',serif">0</div>
<div class="a" style="left:309px;top:71px;height:36px;line-height:36px;font-size:17px;color:#111;font-family:'Liberation Serif',serif">0</div>
<div class="a" style="left:0;top:106px;width:342px;height:1px;background:#d4d4d4"></div>
<div class="a" style="left:0;top:107px;width:69px;height:36px;line-height:36px;text-align:center;font-size:17px;color:#111;font-family:'Liberation Serif',serif">3</div>
<div class="a" style="left:149px;top:107px;height:36px;line-height:36px;font-size:17px;color:#111;font-family:'Liberation Serif',serif">0</div>
<div class="a" style="left:229px;top:107px;height:36px;line-height:36px;font-size:17px;color:#111;font-family:'Liberation Serif',serif">0</div>
<div class="a" style="left:309px;top:107px;height:36px;line-height:36px;font-size:17px;color:#111;font-family:'Liberation Serif',serif">0</div>
<div class="a" style="left:0;top:142px;width:342px;height:1px;background:#d4d4d4"></div>
<div class="a" style="left:0;top:143px;width:69px;height:36px;line-height:36px;text-align:center;font-size:17px;color:#111;font-family:'Liberation Serif',serif">4</div>
<div class="a" style="left:149px;top:143px;height:36px;line-height:36px;font-size:17px;color:#111;font-family:'Liberation Serif',serif">0</div>
<div class="a" style="left:229px;top:143px;height:36px;line-height:36px;font-size:17px;color:#111;font-family:'Liberation Serif',serif">0</div>
<div class="a" style="left:309px;top:143px;height:36px;line-height:36px;font-size:17px;color:#111;font-family:'Liberation Serif',serif">0</div>
<div class="a" style="left:0;top:158px;width:342px;height:26px;background:#f0f0f0"></div>
<div class="a" style="left:27px;top:158px;width:315px;height:26px;background:#c9c9c9"></div>
<svg class="a" style="left:8px;top:165px" width="12" height="12"><path d="M8 1.5 L3.5 6 L8 10.5" fill="none" stroke="#555" stroke-width="2"/></svg>
</div>
<div class="a" style="left:1571px;top:354px;width:342px;height:1px;background:#f8f8f8"></div>
<div class="a btn" style="left:1793px;top:362px;width:140px;text-align:left;padding-left:17px">恢复系统参数</div>
<div class="a" style="left:1893px;top:258px;width:14px;height:108px;background:linear-gradient(90deg,rgba(255,255,255,0),#fff)"></div>
<div class="a" style="left:1907px;top:258px;width:8px;height:108px;border-radius:3px 0 0 3px;background:linear-gradient(180deg,#3a332c 0%,#6a625a 15%,#e8e4dc 30%,#f4f2ee 45%,#2a2420 60%,#4a3a30 80%,#201a16 100%)"></div>
<div class="a" style="left:1002px;top:396px;width:911px;height:1px;background:#d0d0d0"></div>
<div class="a" style="left:1002px;top:396px;width:911px;height:1px;background:#d9d9d9"></div>
<div class="a" style="left:1089px;top:372px;width:80px;height:25px;background:#f0f0f0;border:1px solid #d9d9d9;border-bottom:none"></div>
<div class="a" style="left:1002px;top:370px;width:88px;height:28px;background:#fff;border:1px solid #d9d9d9;border-bottom:none"></div>
<div class="a lbl" style="left:1011px;top:373px">指标公式</div>
<div class="a lbl" style="left:1095px;top:375px">公式说明</div>
<div class="a" style="left:1002px;top:406px;width:911px;height:403px;background:#fff"></div>
<div class="a" style="left:1002px;top:406px;width:44px;height:403px;background:#c0c0c0"></div>
<div class="a" style="left:1047px;top:407px;width:1px;height:28px;background:#000"></div>
<svg class="a" style="left:0;top:0" width="1913" height="948" font-family="Liberation Sans">
<g transform="translate(0,429)">
<text x="1047.7" font-size="21" fill="#000" textLength="43.800000000000004" lengthAdjust="spacingAndGlyphs">A1:=</text>
<text x="1091.4" font-size="21" fill="#0000ff" textLength="128.5" lengthAdjust="spacingAndGlyphs">VALUEWHEN</text>
<text x="1221.2" font-size="21" fill="#000" textLength="5.8" lengthAdjust="spacingAndGlyphs">(</text>
<text x="1227.6000000000001" font-size="21" fill="#0000ff" textLength="53.0" lengthAdjust="spacingAndGlyphs">MOD</text>
<text x="1280.6000000000001" font-size="21" fill="#000" textLength="5.8" lengthAdjust="spacingAndGlyphs">(</text>
<text x="1287.6000000000001" font-size="21" fill="#0000ff" textLength="119.0" lengthAdjust="spacingAndGlyphs">DAYBARPOS</text>
<text x="1405.1000000000001" font-size="21" fill="#000" textLength="55.800000000000004" lengthAdjust="spacingAndGlyphs">,1)=1,</text>
<text x="1461.5" font-size="21" fill="#0000ff" textLength="36.800000000000004" lengthAdjust="spacingAndGlyphs">REF</text>
<text x="1497.5" font-size="21" fill="#000" textLength="5.8" lengthAdjust="spacingAndGlyphs">(</text>
<text x="1503.9" font-size="21" fill="#0000ff" textLength="12.8" lengthAdjust="spacingAndGlyphs">C</text>
<text x="1516.6000000000001" font-size="21" fill="#000" textLength="38.800000000000004" lengthAdjust="spacingAndGlyphs">,1));</text>
</g>
<text x="1040" y="429" font-size="21" font-weight="bold" text-anchor="end" fill="#000">1</text>
<g transform="translate(0,458)">
<text x="1047.7" font-size="21" fill="#000" textLength="43.800000000000004" lengthAdjust="spacingAndGlyphs">A2:=</text>
<text x="1091.4" font-size="21" fill="#0000ff" textLength="128.5" lengthAdjust="spacingAndGlyphs">VALUEWHEN</text>
<text x="1221.2" font-size="21" fill="#000" textLength="5.8" lengthAdjust="spacingAndGlyphs">(</text>
<text x="1227.6000000000001" font-size="21" fill="#0000ff" textLength="53.0" lengthAdjust="spacingAndGlyphs">MOD</text>
<text x="1280.6000000000001" font-size="21" fill="#000" textLength="5.8" lengthAdjust="spacingAndGlyphs">(</text>
<text x="1287.6000000000001" font-size="21" fill="#0000ff" textLength="119.0" lengthAdjust="spacingAndGlyphs">DAYBARPOS</text>
<text x="1405.1000000000001" font-size="21" fill="#000" textLength="55.800000000000004" lengthAdjust="spacingAndGlyphs">,3)=1,</text>
<text x="1461.5" font-size="21" fill="#0000ff" textLength="36.800000000000004" lengthAdjust="spacingAndGlyphs">REF</text>
<text x="1497.5" font-size="21" fill="#000" textLength="5.8" lengthAdjust="spacingAndGlyphs">(</text>
<text x="1503.9" font-size="21" fill="#0000ff" textLength="12.8" lengthAdjust="spacingAndGlyphs">C</text>
<text x="1516.6000000000001" font-size="21" fill="#000" textLength="38.800000000000004" lengthAdjust="spacingAndGlyphs">,1));</text>
</g>
<text x="1040" y="458" font-size="21" font-weight="bold" text-anchor="end" fill="#000">2</text>
<g transform="translate(0,487)">
<text x="1047.7" font-size="21" fill="#000" textLength="43.800000000000004" lengthAdjust="spacingAndGlyphs">A3:=</text>
<text x="1091.4" font-size="21" fill="#0000ff" textLength="128.5" lengthAdjust="spacingAndGlyphs">VALUEWHEN</text>
<text x="1221.2" font-size="21" fill="#000" textLength="5.8" lengthAdjust="spacingAndGlyphs">(</text>
<text x="1227.6000000000001" font-size="21" fill="#0000ff" textLength="53.0" lengthAdjust="spacingAndGlyphs">MOD</text>
<text x="1280.6000000000001" font-size="21" fill="#000" textLength="5.8" lengthAdjust="spacingAndGlyphs">(</text>
<text x="1287.6000000000001" font-size="21" fill="#0000ff" textLength="119.0" lengthAdjust="spacingAndGlyphs">DAYBARPOS</text>
<text x="1405.1000000000001" font-size="21" fill="#000" textLength="55.800000000000004" lengthAdjust="spacingAndGlyphs">,5)=1,</text>
<text x="1461.5" font-size="21" fill="#0000ff" textLength="36.800000000000004" lengthAdjust="spacingAndGlyphs">REF</text>
<text x="1497.5" font-size="21" fill="#000" textLength="5.8" lengthAdjust="spacingAndGlyphs">(</text>
<text x="1503.9" font-size="21" fill="#0000ff" textLength="12.8" lengthAdjust="spacingAndGlyphs">C</text>
<text x="1516.6000000000001" font-size="21" fill="#000" textLength="38.800000000000004" lengthAdjust="spacingAndGlyphs">,1));</text>
</g>
<text x="1040" y="487" font-size="21" font-weight="bold" text-anchor="end" fill="#000">3</text>
<g transform="translate(0,516)">
<text x="1047.7" font-size="21" fill="#000" textLength="43.800000000000004" lengthAdjust="spacingAndGlyphs">A4:=</text>
<text x="1091.4" font-size="21" fill="#0000ff" textLength="128.5" lengthAdjust="spacingAndGlyphs">VALUEWHEN</text>
<text x="1221.2" font-size="21" fill="#000" textLength="5.8" lengthAdjust="spacingAndGlyphs">(</text>
<text x="1227.6000000000001" font-size="21" fill="#0000ff" textLength="53.0" lengthAdjust="spacingAndGlyphs">MOD</text>
<text x="1280.6000000000001" font-size="21" fill="#000" textLength="5.8" lengthAdjust="spacingAndGlyphs">(</text>
<text x="1287.6000000000001" font-size="21" fill="#0000ff" textLength="119.0" lengthAdjust="spacingAndGlyphs">DAYBARPOS</text>
<text x="1405.1000000000001" font-size="21" fill="#000" textLength="67.8" lengthAdjust="spacingAndGlyphs">,15)=1,</text>
<text x="1473.5" font-size="21" fill="#0000ff" textLength="36.800000000000004" lengthAdjust="spacingAndGlyphs">REF</text>
<text x="1509.5" font-size="21" fill="#000" textLength="5.8" lengthAdjust="spacingAndGlyphs">(</text>
<text x="1515.9" font-size="21" fill="#0000ff" textLength="12.8" lengthAdjust="spacingAndGlyphs">C</text>
<text x="1528.6000000000001" font-size="21" fill="#000" textLength="38.800000000000004" lengthAdjust="spacingAndGlyphs">,1));</text>
</g>
<text x="1040" y="516" font-size="21" font-weight="bold" text-anchor="end" fill="#000">4</text>
<g transform="translate(0,545)">
<text x="1047.7" font-size="21" fill="#000" textLength="33.2" lengthAdjust="spacingAndGlyphs">D1:</text>
<text x="1085.3" font-size="21" fill="#0000ff" textLength="46.400000000000006" lengthAdjust="spacingAndGlyphs">EMA</text>
<text x="1132.4" font-size="21" fill="#000" textLength="94.4" lengthAdjust="spacingAndGlyphs">(A1,12*1)</text>
<text x="1230.2" font-size="21" fill="#000" textLength="7.2" lengthAdjust="spacingAndGlyphs">-</text>
<text x="1243.4" font-size="21" fill="#0000ff" textLength="46.400000000000006" lengthAdjust="spacingAndGlyphs">EMA</text>
<text x="1290.4" font-size="21" fill="#000" textLength="100.10000000000001" lengthAdjust="spacingAndGlyphs">(A1,26*1);</text>
</g>
<text x="1040" y="545" font-size="21" font-weight="bold" text-anchor="end" fill="#000">5</text>
</svg>
<div class="a btn" style="left:1005px;width:102px">语法检测</div>
<div class="a btn" style="left:1136px;width:102px">插入函数</div>
<div class="a btn" style="left:1242px;width:72px">颜色</div>
<div class="a btn" style="left:1318px;width:72px">线型</div>
<div class="a btn" style="left:1395px;width:72px">图标</div>
<div class="a btn" style="left:1471px;width:72px">声音</div>
<div class="a btn" style="left:1548px;width:72px">信号</div>
<div class="a btn" style="left:1739px;width:102px">确定</div>
<div class="a btn" style="left:1851px;width:102px">取消</div>
</body></html>
